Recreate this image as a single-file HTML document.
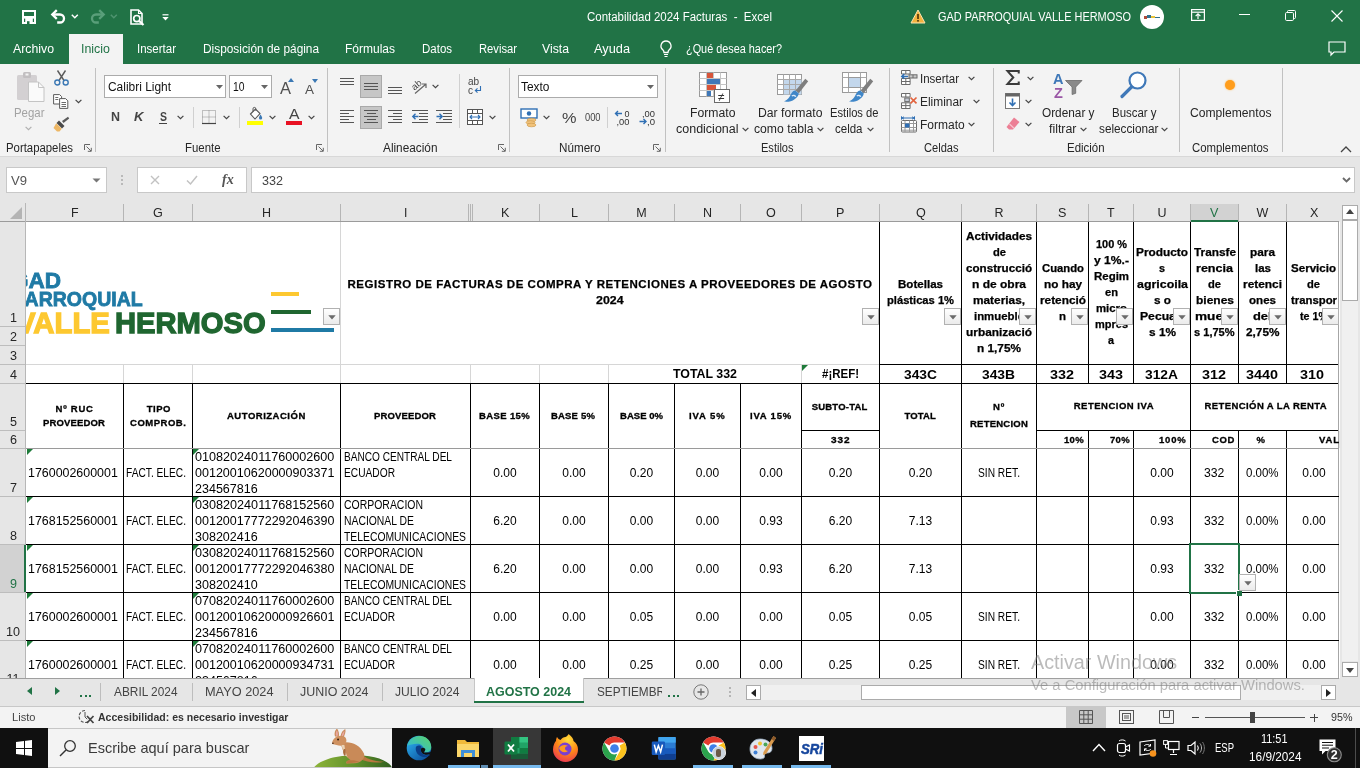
<!DOCTYPE html>
<html lang="es"><head><meta charset="utf-8"><title>Contabilidad 2024 Facturas - Excel</title>
<style>
html,body{margin:0;padding:0;}
body{will-change:transform;width:1360px;height:768px;overflow:hidden;position:relative;background:#fff;font-family:"Liberation Sans",sans-serif;font-size:12px;color:#000;}
.a{position:absolute;box-sizing:border-box;}
.t{white-space:pre;transform-origin:0 50%;}
.c{position:absolute;box-sizing:border-box;display:flex;align-items:center;justify-content:center;text-align:center;overflow:hidden;}
svg{position:absolute;overflow:visible;}
</style></head>
<body>
<div class="a " style="left:0px;top:0px;width:1360px;height:64px;background:#217346;"></div>
<div class="a " style="left:0px;top:64px;width:1360px;height:92px;background:#f3f3f3;"></div>
<div class="a " style="left:0px;top:156px;width:1360px;height:1px;background:#d8d8d8;"></div>
<div class="a " style="left:0px;top:157px;width:1360px;height:46px;background:#e6e6e6;"></div>
<svg style="left:22px;top:10px" width="14" height="14" viewBox="0 0 14 14"><rect x="1" y="1" width="12" height="12" fill="none" stroke="#fff" stroke-width="2"/><rect x="1" y="6" width="12" height="2.6" fill="#fff"/><rect x="3.2" y="8" width="7.600" height="6" fill="#fff"/><rect x="5" y="11.200" width="2.500" height="2.800" fill="#217346"/></svg>
<svg style="left:50px;top:9px" width="17" height="16" viewBox="0 0 17 16"><path d="M2.200 5.500h7.800a4 4 0 0 1 0 8h-2.800" fill="none" stroke="#fff" stroke-width="2.300"/><path d="M6.800 1.200 2.300 5.500l4.500 4.300" fill="none" stroke="#fff" stroke-width="2.300"/></svg>
<svg style="left:71px;top:14px" width="8" height="5" viewBox="0 0 8 5"><path d="M0.800 0.800l3 3 3-3" fill="none" stroke="#fff" stroke-width="1.500"/></svg>
<svg style="left:88.500px;top:9px" width="17" height="16" viewBox="0 0 17 16"><path d="M14.800 5.500h-7.800a4 4 0 0 0 0 8h2.800" fill="none" stroke="#5a9f7a" stroke-width="2.300"/><path d="M10.200 1.200l4.500 4.300-4.500 4.300" fill="none" stroke="#5a9f7a" stroke-width="2.300"/></svg>
<svg style="left:110px;top:14px" width="8" height="5" viewBox="0 0 8 5"><path d="M0.800 0.800l3 3 3-3" fill="none" stroke="#4f9470" stroke-width="1.500"/></svg>
<svg style="left:130px;top:9px" width="16" height="17" viewBox="0 0 16 17"><path d="M1 1h7.500l3.500 3.500V15H1z" fill="none" stroke="#fff" stroke-width="1.600"/><path d="M8.500 1v3.500H12" fill="none" stroke="#fff" stroke-width="1.100"/><circle cx="6.800" cy="9.600" r="3.100" fill="#217346" stroke="#fff" stroke-width="1.700"/><path d="M9.200 12l4.300 4" stroke="#fff" stroke-width="2.200"/></svg>
<svg style="left:161.500px;top:13.500px" width="7" height="7" viewBox="0 0 7 7"><path d="M0.500 0.800h6" stroke="#fff" stroke-width="1.200"/><path d="M0.300 3h6.400L3.500 6.500z" fill="#fff"/></svg>
<div class="a t" style="left:587px;top:9.0px;font-size:12px;line-height:16px;color:#fff;transform:scaleX(0.956);">Contabilidad 2024 Facturas  -  Excel</div>
<svg style="left:910px;top:9px" width="16" height="15" viewBox="0 0 16 15"><path d="M8 1 15 14H1z" fill="#f4b23e" stroke="#fbe3b0" stroke-width="1" stroke-linejoin="round"/><rect x="7.2" y="5" width="1.6" height="5" fill="#4a3208"/><rect x="7.2" y="11" width="1.6" height="1.6" fill="#4a3208"/></svg>
<div class="a t" style="left:938px;top:9.0px;font-size:12px;line-height:16px;color:#fff;transform:scaleX(0.911);">GAD PARROQUIAL VALLE HERMOSO</div>
<div class="a " style="left:1140px;top:5px;width:24px;height:24px;background:#fff;border-radius:12px;"></div>
<div class="a " style="left:1144px;top:16px;width:3px;height:3px;background:#b04a3a;"></div>
<div class="a " style="left:1147px;top:15px;width:4px;height:3px;background:#2f6f8f;"></div>
<div class="a " style="left:1151px;top:16px;width:4px;height:2px;background:#e8c33b;"></div>
<div class="a " style="left:1155px;top:17px;width:5px;height:1px;background:#2f6f8f;"></div>
<svg style="left:1191px;top:9px" width="14" height="12" viewBox="0 0 14 12"><rect x="0.6" y="0.6" width="12.8" height="10.8" fill="none" stroke="#fff" stroke-width="1.2"/><path d="M0.6 3.2h12.8" stroke="#fff" stroke-width="1.2"/><path d="M7 10V5M4.6 7.2 7 4.8l2.4 2.4" fill="none" stroke="#fff" stroke-width="1.2"/></svg>
<div class="a " style="left:1239px;top:14px;width:11px;height:1px;background:#fff;"></div>
<svg style="left:1285px;top:10px" width="11" height="11" viewBox="0 0 11 11"><rect x="0.5" y="2.5" width="8" height="8" rx="1.2" fill="none" stroke="#fff" stroke-width="1"/><path d="M2.5 2.5V1.5a1 1 0 0 1 1-1h6a1 1 0 0 1 1 1v6a1 1 0 0 1-1 1H8.5" fill="none" stroke="#fff" stroke-width="1"/></svg>
<svg style="left:1331px;top:10px" width="12" height="12" viewBox="0 0 12 12"><path d="M0.5 0.5l11 11M11.5 0.5l-11 11" stroke="#fff" stroke-width="1.1"/></svg>
<div class="a " style="left:69px;top:34px;width:54px;height:31px;background:#f3f3f3;"></div>
<div class="a t" style="left:13px;top:41.0px;font-size:12.5px;line-height:16px;color:#fff;transform:scaleX(0.984);">Archivo</div>
<div class="a t" style="left:81px;top:41.0px;font-size:12.5px;line-height:16px;color:#217346;transform:scaleX(0.994);">Inicio</div>
<div class="a t" style="left:137px;top:41.0px;font-size:12.5px;line-height:16px;color:#fff;transform:scaleX(0.920);">Insertar</div>
<div class="a t" style="left:203px;top:41.0px;font-size:12.5px;line-height:16px;color:#fff;transform:scaleX(0.949);">Disposición de página</div>
<div class="a t" style="left:345px;top:41.0px;font-size:12.5px;line-height:16px;color:#fff;transform:scaleX(0.960);">Fórmulas</div>
<div class="a t" style="left:422px;top:41.0px;font-size:12.5px;line-height:16px;color:#fff;transform:scaleX(0.919);">Datos</div>
<div class="a t" style="left:479px;top:41.0px;font-size:12.5px;line-height:16px;color:#fff;transform:scaleX(0.897);">Revisar</div>
<div class="a t" style="left:542px;top:41.0px;font-size:12.5px;line-height:16px;color:#fff;transform:scaleX(0.980);">Vista</div>
<div class="a t" style="left:594px;top:41.0px;font-size:12.5px;line-height:16px;color:#fff;transform:scaleX(1.022);">Ayuda</div>
<div class="a t" style="left:686px;top:41.0px;font-size:12.5px;line-height:16px;color:#fff;transform:scaleX(0.869);">¿Qué desea hacer?</div>
<svg style="left:659px;top:40px" width="14" height="18" viewBox="0 0 14 18"><path d="M7 1a5 5 0 0 0-3 9c.7.7 1 1.5 1 2.5h4c0-1 .3-1.8 1-2.5A5 5 0 0 0 7 1z" fill="none" stroke="#fff" stroke-width="1.3"/><path d="M5 14.5h4M5.5 16.5h3" stroke="#fff" stroke-width="1.2"/></svg>
<svg style="left:1328px;top:41px" width="18" height="15" viewBox="0 0 18 15"><path d="M1 1h16v10H6l-3 3v-3H1z" fill="none" stroke="#fff" stroke-width="1.2"/></svg>
<div class="a " style="left:95px;top:68px;width:1px;height:84px;background:#c1c1c1;"></div>
<div class="a " style="left:327px;top:68px;width:1px;height:84px;background:#c1c1c1;"></div>
<div class="a " style="left:509px;top:68px;width:1px;height:84px;background:#c1c1c1;"></div>
<div class="a " style="left:665px;top:68px;width:1px;height:84px;background:#c1c1c1;"></div>
<div class="a " style="left:889px;top:68px;width:1px;height:84px;background:#c1c1c1;"></div>
<div class="a " style="left:993px;top:68px;width:1px;height:84px;background:#c1c1c1;"></div>
<div class="a " style="left:1179px;top:68px;width:1px;height:84px;background:#c1c1c1;"></div>
<div class="a " style="left:1282px;top:68px;width:1px;height:84px;background:#c1c1c1;"></div>
<svg style="left:16px;top:71px" width="30" height="32" viewBox="0 0 30 32"><rect x="1" y="4" width="20" height="25" rx="1.5" fill="#d3d0d2"/><rect x="7" y="1" width="8" height="6" rx="1.5" fill="#c2bfc1"/><rect x="9.5" y="2.5" width="3" height="2" fill="#f3f3f3"/><path d="M12.5 11h10l5.5 5.5V30.5h-15.5z" fill="#fafafa" stroke="#c4c4c4" stroke-width="1"/><path d="M22.5 11v5.5H28" fill="none" stroke="#c4c4c4" stroke-width="1"/></svg>
<div class="a t" style="left:14px;top:105.0px;font-size:12px;line-height:16px;color:#a3a3a3;transform:scaleX(0.952);">Pegar</div>
<svg style="left:25.0px;top:126px" width="7" height="5" viewBox="0 0 7 5"><path d="M0.6 0.8l2.9 2.9 2.9-2.9" fill="none" stroke="#b0b0b0" stroke-width="1.2"/></svg>
<svg style="left:54px;top:70px" width="15" height="16" viewBox="0 0 15 16"><path d="M3.5 0.5 10 10.5M11.5 0.5 5 10.5" stroke="#5b5b5b" stroke-width="1.4" fill="none"/><circle cx="3.3" cy="12.5" r="2.5" fill="none" stroke="#3b78b4" stroke-width="1.4"/><circle cx="11.7" cy="12.5" r="2.5" fill="none" stroke="#3b78b4" stroke-width="1.4"/></svg>
<svg style="left:53px;top:94px" width="16" height="15" viewBox="0 0 16 15"><path d="M0.6 0.6h6l2 2V10H0.6z" fill="#fff" stroke="#5b5b5b" stroke-width="1"/><path d="M6.6 4.6h6l2.2 2.2v7.6H6.6z" fill="#fff" stroke="#5b5b5b" stroke-width="1"/><path d="M8.5 8.5h4.5M8.5 10.5h4.5M8.5 12.5h4.5M2.3 3.5h3M2.3 5.5h3" stroke="#5b5b5b" stroke-width="0.9"/></svg>
<svg style="left:74.5px;top:99px" width="7" height="5" viewBox="0 0 7 5"><path d="M0.6 0.8l2.9 2.9 2.9-2.9" fill="none" stroke="#444" stroke-width="1.2"/></svg>
<svg style="left:53px;top:116px" width="17" height="16" viewBox="0 0 17 16"><path d="M9 5 15 0.8l1.2 1.6L10.5 7z" fill="#5b5b5b"/><path d="M6 4.5 11.5 10 9 12.5 3.5 7z" fill="#4a4a4a"/><path d="M3.2 7.2 8.8 12.8 6.5 15.5H4l-3.5-3.5z" fill="#edb765"/></svg>
<div class="a t" style="left:6px;top:140.0px;font-size:12px;line-height:16px;color:#262626;transform:scaleX(0.947);">Portapapeles</div>
<svg style="left:84px;top:144px" width="8" height="8" viewBox="0 0 8 8"><path d="M0.5 6V0.5H6" fill="none" stroke="#666" stroke-width="1"/><path d="M2.5 2.5l4.5 4.5M7.3 3.8v3.5H3.8" fill="none" stroke="#666" stroke-width="1"/></svg>
<div class="a " style="left:104px;top:75px;width:122px;height:23px;background:#fff;border:1px solid #ababab;"></div>
<div class="a t" style="left:108px;top:79.0px;font-size:12.5px;line-height:16px;color:#111;transform:scaleX(0.955);">Calibri Light</div>
<div class="a " style="left:229px;top:75px;width:43px;height:23px;background:#fff;border:1px solid #ababab;"></div>
<div class="a t" style="left:233px;top:79.0px;font-size:12.5px;line-height:16px;color:#111;transform:scaleX(0.827);">10</div>
<svg style="left:216px;top:85.0px" width="7" height="4" viewBox="0 0 7 4"><path d="M0 0h7l-3.5 4z" fill="#666"/></svg>
<svg style="left:261px;top:85.0px" width="7" height="4" viewBox="0 0 7 4"><path d="M0 0h7l-3.5 4z" fill="#666"/></svg>
<div class="a t" style="left:280px;top:77.5px;font-size:16px;line-height:21px;color:#505050;transform:scaleX(1.031);">A</div>
<svg style="left:288px;top:78px" width="6" height="4" viewBox="0 0 6 4"><path d="M3 0l3 4H0z" fill="#3b78b4"/></svg>
<div class="a t" style="left:305px;top:80.5px;font-size:13px;line-height:17px;color:#505050;transform:scaleX(1.038);">A</div>
<svg style="left:312px;top:79px" width="6" height="4" viewBox="0 0 6 4"><path d="M0 0h6l-3 4z" fill="#3b78b4"/></svg>
<div class="a t" style="left:110.5px;top:108.0px;font-size:13px;line-height:17px;color:#444;font-weight:bold;transform:scaleX(0.959);">N</div>
<div class="a t" style="left:134px;top:108.0px;font-size:13px;line-height:17px;color:#444;font-weight:bold;font-style:italic;transform:scaleX(1.012);">K</div>
<div class="a t" style="left:159.5px;top:107.5px;font-size:13px;line-height:17px;color:#444;font-weight:bold;transform:scaleX(0.807);">S</div>
<div class="a " style="left:159px;top:123px;width:8px;height:1px;background:#444;"></div>
<svg style="left:176.5px;top:115px" width="7" height="5" viewBox="0 0 7 5"><path d="M0.6 0.8l2.9 2.9 2.9-2.9" fill="none" stroke="#444" stroke-width="1.2"/></svg>
<div class="a " style="left:193px;top:107px;width:1px;height:21px;background:#d0d0d0;"></div>
<div class="a " style="left:239px;top:107px;width:1px;height:21px;background:#d0d0d0;"></div>
<svg style="left:202px;top:110px" width="14" height="14" viewBox="0 0 14 14"><path d="M0.5 0.5h13v13H0.5zM7 0.5v13M0.5 7h13" fill="none" stroke="#8a8a8a" stroke-width="1" stroke-dasharray="1 1"/><path d="M0 13.5h14" stroke="#444" stroke-width="1.2"/></svg>
<svg style="left:222.5px;top:115px" width="7" height="5" viewBox="0 0 7 5"><path d="M0.6 0.8l2.9 2.9 2.9-2.9" fill="none" stroke="#444" stroke-width="1.2"/></svg>
<svg style="left:247px;top:108px" width="17" height="13" viewBox="0 0 17 13"><path d="M3.5 6 8.5 1l4.5 4.5-5 5.5z" fill="#fff" stroke="#555" stroke-width="1.1"/><path d="M6 3.5V0.8a1.4 1.4 0 0 1 2.8 0v2" fill="none" stroke="#555" stroke-width="1"/><path d="M13.5 6.5c1 1.5 1.7 2.6 1.7 3.4a1.6 1.6 0 0 1-3.2 0c0-.8.6-1.9 1.5-3.4z" fill="#3b78b4"/></svg>
<div class="a " style="left:247px;top:121px;width:16px;height:4px;background:#ffff00;"></div>
<svg style="left:268.5px;top:115px" width="7" height="5" viewBox="0 0 7 5"><path d="M0.6 0.8l2.9 2.9 2.9-2.9" fill="none" stroke="#444" stroke-width="1.2"/></svg>
<div class="a t" style="left:289px;top:105.0px;font-size:14.5px;line-height:19px;color:#444;transform:scaleX(1.086);">A</div>
<div class="a " style="left:286px;top:121px;width:16px;height:4px;background:#e81123;"></div>
<svg style="left:307.5px;top:115px" width="7" height="5" viewBox="0 0 7 5"><path d="M0.6 0.8l2.9 2.9 2.9-2.9" fill="none" stroke="#444" stroke-width="1.2"/></svg>
<div class="a t" style="left:185px;top:140.0px;font-size:12px;line-height:16px;color:#262626;transform:scaleX(0.950);">Fuente</div>
<svg style="left:316px;top:144px" width="8" height="8" viewBox="0 0 8 8"><path d="M0.5 6V0.5H6" fill="none" stroke="#666" stroke-width="1"/><path d="M2.5 2.5l4.5 4.5M7.3 3.8v3.5H3.8" fill="none" stroke="#666" stroke-width="1"/></svg>
<div class="a " style="left:360px;top:75px;width:22px;height:23px;background:#c6c6c6;border:1px solid #a9a9a9;"></div>
<div class="a " style="left:360px;top:106px;width:22px;height:23px;background:#c6c6c6;border:1px solid #a9a9a9;"></div>
<div class="a " style="left:340px;top:78px;width:14px;height:1px;background:#555;"></div>
<div class="a " style="left:340px;top:81px;width:14px;height:1px;background:#555;"></div>
<div class="a " style="left:340px;top:84px;width:14px;height:1px;background:#555;"></div>
<div class="a " style="left:364px;top:83px;width:14px;height:1px;background:#555;"></div>
<div class="a " style="left:364px;top:86px;width:14px;height:1px;background:#555;"></div>
<div class="a " style="left:364px;top:89px;width:14px;height:1px;background:#555;"></div>
<div class="a " style="left:388px;top:87px;width:14px;height:1px;background:#555;"></div>
<div class="a " style="left:388px;top:90px;width:14px;height:1px;background:#555;"></div>
<div class="a " style="left:388px;top:93px;width:14px;height:1px;background:#555;"></div>
<div class="a " style="left:340px;top:110px;width:14px;height:1px;background:#555;"></div>
<div class="a " style="left:340px;top:113px;width:9px;height:1px;background:#555;"></div>
<div class="a " style="left:340px;top:116px;width:14px;height:1px;background:#555;"></div>
<div class="a " style="left:340px;top:119px;width:9px;height:1px;background:#555;"></div>
<div class="a " style="left:340px;top:122px;width:14px;height:1px;background:#555;"></div>
<div class="a " style="left:364.0px;top:110px;width:14px;height:1px;background:#555;"></div>
<div class="a " style="left:366.5px;top:113px;width:9px;height:1px;background:#555;"></div>
<div class="a " style="left:364.0px;top:116px;width:14px;height:1px;background:#555;"></div>
<div class="a " style="left:366.5px;top:119px;width:9px;height:1px;background:#555;"></div>
<div class="a " style="left:364.0px;top:122px;width:14px;height:1px;background:#555;"></div>
<div class="a " style="left:388px;top:110px;width:14px;height:1px;background:#555;"></div>
<div class="a " style="left:393px;top:113px;width:9px;height:1px;background:#555;"></div>
<div class="a " style="left:388px;top:116px;width:14px;height:1px;background:#555;"></div>
<div class="a " style="left:393px;top:119px;width:9px;height:1px;background:#555;"></div>
<div class="a " style="left:388px;top:122px;width:14px;height:1px;background:#555;"></div>
<svg style="left:411px;top:77px" width="17" height="18" viewBox="0 0 17 18"><text x="1" y="11" font-size="9.5" font-family="Liberation Sans, sans-serif" fill="#444" transform="rotate(-40 6 9)">ab</text><path d="M4 16.5 14.5 7.5M11 7h4v4" fill="none" stroke="#666" stroke-width="1.2"/></svg>
<svg style="left:431.5px;top:83.5px" width="7" height="5" viewBox="0 0 7 5"><path d="M0.6 0.8l2.9 2.9 2.9-2.9" fill="none" stroke="#444" stroke-width="1.2"/></svg>
<div class="a " style="left:419px;top:110px;width:9px;height:1px;background:#555;"></div>
<div class="a " style="left:419px;top:113px;width:9px;height:1px;background:#555;"></div>
<div class="a " style="left:419px;top:116px;width:9px;height:1px;background:#555;"></div>
<div class="a " style="left:419px;top:119px;width:9px;height:1px;background:#555;"></div>
<div class="a " style="left:419px;top:122px;width:9px;height:1px;background:#555;"></div>
<div class="a " style="left:412px;top:110px;width:16px;height:1px;background:#555;"></div>
<div class="a " style="left:412px;top:122px;width:16px;height:1px;background:#555;"></div>
<svg style="left:412px;top:113px" width="7" height="7" viewBox="0 0 7 7"><path d="M6.5 3.5H1M3.5 0.8 0.8 3.5 3.5 6.2" fill="none" stroke="#2f6fb4" stroke-width="1.4"/></svg>
<div class="a " style="left:443px;top:110px;width:9px;height:1px;background:#555;"></div>
<div class="a " style="left:443px;top:113px;width:9px;height:1px;background:#555;"></div>
<div class="a " style="left:443px;top:116px;width:9px;height:1px;background:#555;"></div>
<div class="a " style="left:443px;top:119px;width:9px;height:1px;background:#555;"></div>
<div class="a " style="left:443px;top:122px;width:9px;height:1px;background:#555;"></div>
<div class="a " style="left:436px;top:110px;width:16px;height:1px;background:#555;"></div>
<div class="a " style="left:436px;top:122px;width:16px;height:1px;background:#555;"></div>
<svg style="left:436px;top:113px" width="7" height="7" viewBox="0 0 7 7"><path d="M0.5 3.5H6M3.5 0.8 6.2 3.5 3.5 6.2" fill="none" stroke="#2f6fb4" stroke-width="1.4"/></svg>
<div class="a " style="left:459px;top:74px;width:1px;height:54px;background:#d0d0d0;"></div>
<svg style="left:467px;top:76px" width="16" height="20" viewBox="0 0 16 20"><text x="1" y="9" font-size="10" font-family="Liberation Sans, sans-serif" fill="#444">ab</text><text x="1" y="17.5" font-size="10" font-family="Liberation Sans, sans-serif" fill="#444">c</text><path d="M13.5 10v4.5H8.5M10.5 12.3 8.3 14.5l2.2 2.2" fill="none" stroke="#2f6fb4" stroke-width="1.1"/></svg>
<svg style="left:467px;top:109px" width="16" height="16" viewBox="0 0 16 16"><rect x="0.5" y="0.5" width="15" height="15" fill="#fff" stroke="#555"/><path d="M0.5 4.5h15M0.5 11.5h15M5.5 0.5v4M10.5 0.5v4M5.5 11.5v4M10.5 11.5v4" stroke="#555" stroke-width="1"/><path d="M3 8h10M5 6 3 8l2 2M11 6l2 2-2 2" fill="none" stroke="#2f6fb4" stroke-width="1.1"/></svg>
<svg style="left:488.5px;top:115px" width="7" height="5" viewBox="0 0 7 5"><path d="M0.6 0.8l2.9 2.9 2.9-2.9" fill="none" stroke="#444" stroke-width="1.2"/></svg>
<div class="a t" style="left:383px;top:140.0px;font-size:12px;line-height:16px;color:#262626;transform:scaleX(0.984);">Alineación</div>
<svg style="left:498px;top:144px" width="8" height="8" viewBox="0 0 8 8"><path d="M0.5 6V0.5H6" fill="none" stroke="#666" stroke-width="1"/><path d="M2.5 2.5l4.5 4.5M7.3 3.8v3.5H3.8" fill="none" stroke="#666" stroke-width="1"/></svg>
<div class="a " style="left:518px;top:75px;width:140px;height:23px;background:#fff;border:1px solid #ababab;"></div>
<div class="a t" style="left:521px;top:79.0px;font-size:12.5px;line-height:16px;color:#111;transform:scaleX(0.954);">Texto</div>
<svg style="left:647px;top:85.0px" width="7" height="4" viewBox="0 0 7 4"><path d="M0 0h7l-3.5 4z" fill="#666"/></svg>
<svg style="left:520px;top:108px" width="20" height="19" viewBox="0 0 20 19"><rect x="1" y="1" width="16" height="9" fill="#fff" stroke="#2f6fb4" stroke-width="1.4"/><circle cx="9" cy="5.5" r="2.2" fill="#2f6fb4"/><ellipse cx="11.5" cy="12" rx="4.5" ry="1.8" fill="#f1c27a" stroke="#c99546" stroke-width="0.6"/><ellipse cx="10.5" cy="14.5" rx="4.5" ry="1.8" fill="#f1c27a" stroke="#c99546" stroke-width="0.6"/><ellipse cx="11.5" cy="17" rx="4.5" ry="1.8" fill="#f1c27a" stroke="#c99546" stroke-width="0.6"/></svg>
<svg style="left:542.5px;top:115px" width="7" height="5" viewBox="0 0 7 5"><path d="M0.6 0.8l2.9 2.9 2.9-2.9" fill="none" stroke="#444" stroke-width="1.2"/></svg>
<div class="a t" style="left:562px;top:107.5px;font-size:15px;line-height:20px;color:#444;transform:scaleX(1.087);">%</div>
<div class="a t" style="left:584.5px;top:110.5px;font-size:10px;line-height:13px;color:#444;transform:scaleX(0.929);">000</div>
<div class="a " style="left:607px;top:107px;width:1px;height:21px;background:#d0d0d0;"></div>
<svg style="left:614px;top:109px" width="18" height="17" viewBox="0 0 18 17"><text x="10.500" y="7.500" font-size="9" font-family="Liberation Sans, sans-serif" fill="#333" textLength="5" lengthAdjust="spacingAndGlyphs">0</text><text x="2.500" y="15.500" font-size="9" font-family="Liberation Sans, sans-serif" fill="#333" textLength="13" lengthAdjust="spacingAndGlyphs">,00</text><path d="M8 4.500H1.500M4 2 1.500 4.500 4 7" fill="none" stroke="#2f6fb4" stroke-width="1.400"/></svg>
<svg style="left:639px;top:109px" width="18" height="17" viewBox="0 0 18 17"><text x="3" y="7.500" font-size="9" font-family="Liberation Sans, sans-serif" fill="#333" textLength="13" lengthAdjust="spacingAndGlyphs">,00</text><text x="8" y="15.500" font-size="9" font-family="Liberation Sans, sans-serif" fill="#333" textLength="8" lengthAdjust="spacingAndGlyphs">,0</text><path d="M0.500 12.500h6.500M4.500 10l2.500 2.500L4.500 15" fill="none" stroke="#2f6fb4" stroke-width="1.400"/></svg>
<div class="a t" style="left:559px;top:140.0px;font-size:12px;line-height:16px;color:#262626;transform:scaleX(0.972);">Número</div>
<svg style="left:653px;top:144px" width="8" height="8" viewBox="0 0 8 8"><path d="M0.5 6V0.5H6" fill="none" stroke="#666" stroke-width="1"/><path d="M2.5 2.5l4.5 4.5M7.3 3.8v3.5H3.8" fill="none" stroke="#666" stroke-width="1"/></svg>
<svg style="left:699px;top:72px" width="32" height="32" viewBox="0 0 32 32"><rect x="0.5" y="0.5" width="27" height="24" fill="#fff" stroke="#9a9a9a"/><path d="M0.5 6.5h27M0.5 12.5h27M0.5 18.5h27M7.5 0.5v24M14.5 0.5v24M21.5 0.5v24" stroke="#c5c5c5" stroke-width="1"/><rect x="8" y="1" width="6" height="5" fill="#d8553a"/><rect x="8" y="7" width="13" height="5" fill="#3f78b8"/><rect x="8" y="13" width="9" height="5" fill="#d8553a"/><rect x="8" y="19" width="4" height="5" fill="#3f78b8"/><rect x="15.5" y="17.5" width="15" height="13" fill="#fff" stroke="#6a6a6a"/><text x="19" y="28.5" font-size="12" font-family="Liberation Sans, sans-serif" fill="#333">≠</text></svg>
<div class="a t" style="left:690px;top:105.0px;font-size:12px;line-height:16px;color:#262626;transform:scaleX(1.018);">Formato</div>
<div class="a t" style="left:676px;top:121.0px;font-size:12px;line-height:16px;color:#262626;transform:scaleX(1.041);">condicional</div>
<svg style="left:741.5px;top:127px" width="7" height="5" viewBox="0 0 7 5"><path d="M0.6 0.8l2.9 2.9 2.9-2.9" fill="none" stroke="#444" stroke-width="1.2"/></svg>
<svg style="left:777px;top:74px" width="26" height="22" viewBox="0 0 26 22"><rect x="0.5" y="0.5" width="24" height="20" fill="#fff" stroke="#9a9a9a"/><rect x="6.5" y="5.5" width="18" height="15" fill="#c3d7ec"/><path d="M0.5 5.5h24M0.5 10.5h24M0.5 15.5h24M6.5 0.5v20M12.5 0.5v20M18.5 0.5v20" stroke="#a9a9a9" stroke-width="1"/></svg>
<svg style="left:783px;top:78px" width="26" height="26" viewBox="0 0 26 26"><path d="M22.300 0.800 25.200 3.200 15.800 15.200 12.600 12.600z" fill="#7e7e7e"/><path d="M12.200 12.400 15.800 15.400c-1 5-7.200 9.200-14.800 8.200 4-2 5.600-4.600 7-7.600 1-2.200 2.400-3.400 4.200-3.600z" fill="#3f86c8"/><path d="M8.800 18c1.400-1 3.200-.6 4 .8" stroke="#dce9f7" stroke-width="1.300" fill="none"/></svg>
<div class="a t" style="left:758px;top:105.0px;font-size:12px;line-height:16px;color:#262626;transform:scaleX(1.018);">Dar formato</div>
<div class="a t" style="left:754px;top:121.0px;font-size:12px;line-height:16px;color:#262626;transform:scaleX(1.014);">como tabla</div>
<svg style="left:816.5px;top:127px" width="7" height="5" viewBox="0 0 7 5"><path d="M0.6 0.8l2.9 2.9 2.9-2.9" fill="none" stroke="#444" stroke-width="1.2"/></svg>
<svg style="left:842px;top:72px" width="26" height="22" viewBox="0 0 26 22"><rect x="0.5" y="0.5" width="24" height="20" fill="#fff" stroke="#9a9a9a"/><path d="M0.5 5.5h24M0.5 15.5h24M6.5 0.5v20M18.5 0.5v20" stroke="#a9a9a9" stroke-width="1"/><rect x="6.5" y="5.5" width="12" height="10" fill="#c3d7ec" stroke="#9a9a9a"/></svg>
<svg style="left:848px;top:77.5px" width="26" height="26" viewBox="0 0 26 26"><path d="M22.300 0.800 25.200 3.200 15.800 15.200 12.600 12.600z" fill="#7e7e7e"/><path d="M12.200 12.400 15.800 15.400c-1 5-7.200 9.200-14.800 8.200 4-2 5.600-4.600 7-7.600 1-2.200 2.400-3.400 4.200-3.600z" fill="#3f86c8"/><path d="M8.800 18c1.400-1 3.200-.6 4 .8" stroke="#dce9f7" stroke-width="1.300" fill="none"/></svg>
<div class="a t" style="left:830px;top:105.0px;font-size:12px;line-height:16px;color:#262626;transform:scaleX(0.932);">Estilos de</div>
<div class="a t" style="left:835px;top:121.0px;font-size:12px;line-height:16px;color:#262626;transform:scaleX(0.959);">celda</div>
<svg style="left:866.5px;top:127px" width="7" height="5" viewBox="0 0 7 5"><path d="M0.6 0.8l2.9 2.9 2.9-2.9" fill="none" stroke="#444" stroke-width="1.2"/></svg>
<div class="a t" style="left:761px;top:140.0px;font-size:12px;line-height:16px;color:#262626;transform:scaleX(0.920);">Estilos</div>
<svg style="left:901px;top:70px" width="17" height="17" viewBox="0 0 17 17"><path d="M0.5 0.5h8.600v3.500H0.500zM4.800 0.500v3.500" fill="#fff" stroke="#6b6b6b"/><path d="M0.500 8.500h8.600v6H0.500zM4.800 8.500v6M0.500 11.500h8.600" fill="#fff" stroke="#6b6b6b"/><rect x="8" y="4.800" width="8" height="3.200" fill="#c9c9c9" stroke="#6b6b6b"/><path d="M12 4.800v3.200" stroke="#6b6b6b"/><path d="M7 6.400H0.800M3.300 4 0.800 6.400l2.500 2.400" fill="none" stroke="#2f6fb4" stroke-width="1.500"/></svg>
<div class="a t" style="left:920px;top:71.0px;font-size:12px;line-height:16px;color:#262626;transform:scaleX(0.959);">Insertar</div>
<svg style="left:968.0px;top:76px" width="7" height="5" viewBox="0 0 7 5"><path d="M0.6 0.8l2.9 2.9 2.9-2.9" fill="none" stroke="#444" stroke-width="1.2"/></svg>
<svg style="left:901px;top:93px" width="17" height="17" viewBox="0 0 17 17"><path d="M0.500 0.500h8.600v3.500H0.500zM4.800 0.500v3.500" fill="#fff" stroke="#6b6b6b"/><path d="M0.500 9.800h8.600v5.700H0.500zM4.800 9.800v5.700M0.500 12.600h8.600" fill="#fff" stroke="#6b6b6b"/><rect x="3.800" y="5" width="4.500" height="3.600" fill="#c5cbd6" stroke="#6b6b6b"/><path d="M9.500 4.500l6 5.800M15.500 4.500l-6 5.800" stroke="#e2643f" stroke-width="1.700"/></svg>
<div class="a t" style="left:920px;top:94.0px;font-size:12px;line-height:16px;color:#262626;transform:scaleX(0.992);">Eliminar</div>
<svg style="left:972.5px;top:99px" width="7" height="5" viewBox="0 0 7 5"><path d="M0.6 0.8l2.9 2.9 2.9-2.9" fill="none" stroke="#444" stroke-width="1.2"/></svg>
<svg style="left:901px;top:116px" width="17" height="17" viewBox="0 0 17 17"><path d="M0.500 2h13M0.500 0.300v3.400M13.500 0.300v3.400M3 0.800 1 2l2 1.200M11 0.800l2 1.200-2 1.200" stroke="#2f6fb4" stroke-width="1" fill="none"/><rect x="0.500" y="4.500" width="15" height="11.500" rx="1" fill="#fff" stroke="#6b6b6b"/><path d="M0.500 7.500h15M0.500 11.500h15M0.500 14.200h15M4 4.500v11.500M8.500 4.500v11.500M12.500 4.500v11.500" stroke="#9a9a9a" stroke-width="1"/><rect x="4" y="7.500" width="4.500" height="4" fill="#2f6fb4"/></svg>
<div class="a t" style="left:920px;top:117.0px;font-size:12px;line-height:16px;color:#262626;">Formato</div>
<svg style="left:967.5px;top:122px" width="7" height="5" viewBox="0 0 7 5"><path d="M0.6 0.8l2.9 2.9 2.9-2.9" fill="none" stroke="#444" stroke-width="1.2"/></svg>
<div class="a t" style="left:924px;top:140.0px;font-size:12px;line-height:16px;color:#262626;transform:scaleX(0.924);">Celdas</div>
<svg style="left:1005px;top:70px" width="16" height="15" viewBox="0 0 16 17"><path d="M14.5 4V1.2H1.8l6.5 7.3L1.8 15.8h12.700v-2.800" fill="none" stroke="#3c3c3c" stroke-width="2.300"/></svg>
<svg style="left:1026.5px;top:76px" width="7" height="5" viewBox="0 0 7 5"><path d="M0.6 0.8l2.9 2.9 2.9-2.9" fill="none" stroke="#444" stroke-width="1.2"/></svg>
<svg style="left:1005px;top:93px" width="15" height="16" viewBox="0 0 15 16"><rect x="0.5" y="0.5" width="14" height="15" fill="#fff" stroke="#777"/><rect x="0.5" y="0.5" width="14" height="3" fill="#666"/><path d="M7.5 5.5v7M4.5 9.5l3 3 3-3" fill="none" stroke="#2f6fb4" stroke-width="1.6"/></svg>
<svg style="left:1024.5px;top:99px" width="7" height="5" viewBox="0 0 7 5"><path d="M0.6 0.8l2.9 2.9 2.9-2.9" fill="none" stroke="#444" stroke-width="1.2"/></svg>
<svg style="left:1006px;top:117px" width="14" height="13" viewBox="0 0 14 13"><path d="M8 0.5 13.5 5 7 12.5H3L0.5 10z" fill="#ec7f95"/><path d="M3.5 7 8 11.2" stroke="#f8c4ce" stroke-width="1.2"/></svg>
<svg style="left:1024.5px;top:122px" width="7" height="5" viewBox="0 0 7 5"><path d="M0.6 0.8l2.9 2.9 2.9-2.9" fill="none" stroke="#444" stroke-width="1.2"/></svg>
<svg style="left:1052px;top:70px" width="32" height="32" viewBox="0 0 32 32"><text x="1" y="13.500" font-size="14.500" font-weight="bold" font-family="Liberation Sans, sans-serif" fill="#3f78b8">A</text><text x="2" y="27.500" font-size="14.500" font-weight="bold" font-family="Liberation Sans, sans-serif" fill="#9a57a6">Z</text><path d="M13.500 10.500h16.500l-6.300 6.500v6.300l-3.600 1.200V17z" fill="#8a8a8a" stroke="#6a6a6a" stroke-width="0.800"/></svg>
<div class="a t" style="left:1042px;top:105.0px;font-size:12px;line-height:16px;color:#262626;transform:scaleX(0.984);">Ordenar y</div>
<div class="a t" style="left:1049px;top:121.0px;font-size:12px;line-height:16px;color:#262626;transform:scaleX(1.031);">filtrar</div>
<svg style="left:1079.5px;top:127px" width="7" height="5" viewBox="0 0 7 5"><path d="M0.6 0.8l2.9 2.9 2.9-2.9" fill="none" stroke="#444" stroke-width="1.2"/></svg>
<svg style="left:1119px;top:70px" width="30" height="30" viewBox="0 0 30 30"><circle cx="18.5" cy="10.5" r="8" fill="#fff" stroke="#3f78b8" stroke-width="2.2"/><path d="M12.5 17 3 26.5" stroke="#3f78b8" stroke-width="3.2" stroke-linecap="round"/></svg>
<div class="a t" style="left:1112px;top:105.0px;font-size:12px;line-height:16px;color:#262626;transform:scaleX(0.953);">Buscar y</div>
<div class="a t" style="left:1099px;top:121.0px;font-size:12px;line-height:16px;color:#262626;transform:scaleX(0.980);">seleccionar</div>
<svg style="left:1160.5px;top:127px" width="7" height="5" viewBox="0 0 7 5"><path d="M0.6 0.8l2.9 2.9 2.9-2.9" fill="none" stroke="#444" stroke-width="1.2"/></svg>
<div class="a t" style="left:1067px;top:140.0px;font-size:12px;line-height:16px;color:#262626;transform:scaleX(0.953);">Edición</div>
<div class="a " style="left:1225px;top:80px;width:10px;height:10px;background:#ff9d1c;border-radius:5px;box-shadow:0 0 2px #ffb650;"></div>
<div class="a t" style="left:1190px;top:105.0px;font-size:12px;line-height:16px;color:#262626;transform:scaleX(1.010);">Complementos</div>
<div class="a t" style="left:1192px;top:140.0px;font-size:12px;line-height:16px;color:#262626;transform:scaleX(0.948);">Complementos</div>
<svg style="left:1340px;top:146px" width="12" height="7" viewBox="0 0 12 7"><path d="M1 6l5-5 5 5" fill="none" stroke="#444" stroke-width="1.3"/></svg>
<div class="a " style="left:6px;top:167px;width:101px;height:26px;background:#fff;border:1px solid #c8c8c8;"></div>
<div class="a t" style="left:11px;top:172.5px;font-size:12px;line-height:16px;color:#555;transform:scaleX(1.090);">V9</div>
<svg style="left:92px;top:178px" width="9" height="5" viewBox="0 0 9 5"><path d="M0.5 0.5h8l-4 4z" fill="#777"/></svg>
<div class="a " style="left:121px;top:175px;width:2px;height:2px;background:#b9b9b9;"></div>
<div class="a " style="left:121px;top:179px;width:2px;height:2px;background:#b9b9b9;"></div>
<div class="a " style="left:121px;top:183px;width:2px;height:2px;background:#b9b9b9;"></div>
<div class="a " style="left:137px;top:167px;width:110px;height:26px;background:#fff;border:1px solid #c8c8c8;"></div>
<svg style="left:150px;top:175px" width="10" height="10" viewBox="0 0 10 10"><path d="M1 1l8 8M9 1l-8 8" stroke="#c2c2c2" stroke-width="1.4"/></svg>
<svg style="left:186px;top:175px" width="12" height="10" viewBox="0 0 12 10"><path d="M1 5.5l3.5 3.5L11 1" fill="none" stroke="#c2c2c2" stroke-width="1.5"/></svg>
<div class="a t" style="left:222px;top:170.5px;font-size:14px;line-height:18px;color:#555;font-weight:bold;font-style:italic;font-family:'Liberation Serif',serif;">fx</div>
<div class="a " style="left:251px;top:167px;width:1104px;height:26px;background:#fff;border:1px solid #c8c8c8;"></div>
<div class="a t" style="left:262px;top:172.5px;font-size:12px;line-height:16px;color:#444;transform:scaleX(1.049);">332</div>
<svg style="left:1342px;top:177px" width="9" height="6" viewBox="0 0 9 6"><path d="M1 1l3.5 3.5L8 1" fill="none" stroke="#6a6a6a" stroke-width="1.9"/></svg>
<div class="a " style="left:0px;top:203px;width:1360px;height:19px;background:#e6e6e6;"></div>
<div class="a " style="left:0px;top:221px;width:1339px;height:1px;background:#9b9b9b;"></div>
<div class="a " style="left:26px;top:222px;width:1313px;height:456px;background:#fff;"></div>
<div class="a " style="left:0px;top:222px;width:25px;height:456px;background:#e6e6e6;"></div>
<div class="a " style="left:25px;top:203px;width:1px;height:475px;background:#b7b7b7;"></div>
<svg style="left:10px;top:207px" width="12" height="12" viewBox="0 0 12 12"><path d="M12 0v12H0z" fill="#b4b4b4"/></svg>
<div class="a t" style="left:70.7px;top:204.5px;font-size:12.5px;line-height:16px;color:#262626;transform:scaleX(0.995);">F</div>
<div class="a " style="left:123px;top:204px;width:1px;height:17px;background:#b5b5b5;"></div>
<div class="a t" style="left:153.1px;top:204.5px;font-size:12.5px;line-height:16px;color:#262626;transform:scaleX(1.008);">G</div>
<div class="a " style="left:192px;top:204px;width:1px;height:17px;background:#b5b5b5;"></div>
<div class="a t" style="left:262.0px;top:204.5px;font-size:12.5px;line-height:16px;color:#262626;">H</div>
<div class="a " style="left:340px;top:204px;width:1px;height:17px;background:#b5b5b5;"></div>
<div class="a t" style="left:403.8px;top:204.5px;font-size:12.5px;line-height:16px;color:#262626;transform:scaleX(0.979);">I</div>
<div class="a " style="left:470px;top:204px;width:1px;height:17px;background:#b5b5b5;"></div>
<div class="a t" style="left:500.8px;top:204.5px;font-size:12.5px;line-height:16px;color:#262626;transform:scaleX(1.007);">K</div>
<div class="a " style="left:539px;top:204px;width:1px;height:17px;background:#b5b5b5;"></div>
<div class="a t" style="left:570.5px;top:204.5px;font-size:12.5px;line-height:16px;color:#262626;transform:scaleX(1.007);">L</div>
<div class="a " style="left:608px;top:204px;width:1px;height:17px;background:#b5b5b5;"></div>
<div class="a t" style="left:636.3px;top:204.5px;font-size:12.5px;line-height:16px;color:#262626;">M</div>
<div class="a " style="left:674px;top:204px;width:1px;height:17px;background:#b5b5b5;"></div>
<div class="a t" style="left:703.0px;top:204.5px;font-size:12.5px;line-height:16px;color:#262626;">N</div>
<div class="a " style="left:740px;top:204px;width:1px;height:17px;background:#b5b5b5;"></div>
<div class="a t" style="left:766.1px;top:204.5px;font-size:12.5px;line-height:16px;color:#262626;transform:scaleX(1.008);">O</div>
<div class="a " style="left:801px;top:204px;width:1px;height:17px;background:#b5b5b5;"></div>
<div class="a t" style="left:836.3px;top:204.5px;font-size:12.5px;line-height:16px;color:#262626;transform:scaleX(1.007);">P</div>
<div class="a " style="left:879px;top:204px;width:1px;height:17px;background:#b5b5b5;"></div>
<div class="a t" style="left:915.6px;top:204.5px;font-size:12.5px;line-height:16px;color:#262626;transform:scaleX(1.008);">Q</div>
<div class="a " style="left:961px;top:204px;width:1px;height:17px;background:#b5b5b5;"></div>
<div class="a t" style="left:994.5px;top:204.5px;font-size:12.5px;line-height:16px;color:#262626;">R</div>
<div class="a " style="left:1036px;top:204px;width:1px;height:17px;background:#b5b5b5;"></div>
<div class="a t" style="left:1058.3px;top:204.5px;font-size:12.5px;line-height:16px;color:#262626;transform:scaleX(1.007);">S</div>
<div class="a " style="left:1088px;top:204px;width:1px;height:17px;background:#b5b5b5;"></div>
<div class="a t" style="left:1107.2px;top:204.5px;font-size:12.5px;line-height:16px;color:#262626;transform:scaleX(0.995);">T</div>
<div class="a " style="left:1133px;top:204px;width:1px;height:17px;background:#b5b5b5;"></div>
<div class="a t" style="left:1157.5px;top:204.5px;font-size:12.5px;line-height:16px;color:#262626;">U</div>
<div class="a " style="left:1190px;top:204px;width:1px;height:17px;background:#b5b5b5;"></div>
<div class="a " style="left:1191px;top:204px;width:47px;height:17px;background:#d2d2d2;"></div>
<div class="a " style="left:1191px;top:220px;width:47px;height:2px;background:#217346;"></div>
<div class="a t" style="left:1210.3px;top:204.5px;font-size:12.5px;line-height:16px;color:#217346;transform:scaleX(1.007);">V</div>
<div class="a " style="left:1238px;top:204px;width:1px;height:17px;background:#b5b5b5;"></div>
<div class="a t" style="left:1256.6px;top:204.5px;font-size:12.5px;line-height:16px;color:#262626;">W</div>
<div class="a " style="left:1286px;top:204px;width:1px;height:17px;background:#b5b5b5;"></div>
<div class="a t" style="left:1309.8px;top:204.5px;font-size:12.5px;line-height:16px;color:#262626;transform:scaleX(1.007);">X</div>
<div class="a " style="left:468px;top:204px;width:1px;height:17px;background:#b5b5b5;"></div>
<div class="a " style="left:472px;top:204px;width:1px;height:17px;background:#b5b5b5;"></div>
<div class="a " style="left:0px;top:326px;width:25px;height:1px;background:#bdbdbd;"></div>
<div class="a t" style="left:9.5px;top:310.0px;font-size:12.5px;line-height:16px;color:#262626;transform:scaleX(1.007);">1</div>
<div class="a " style="left:0px;top:345px;width:25px;height:1px;background:#bdbdbd;"></div>
<div class="a t" style="left:9.5px;top:329.0px;font-size:12.5px;line-height:16px;color:#262626;transform:scaleX(1.007);">2</div>
<div class="a " style="left:0px;top:364px;width:25px;height:1px;background:#bdbdbd;"></div>
<div class="a t" style="left:9.5px;top:348.0px;font-size:12.5px;line-height:16px;color:#262626;transform:scaleX(1.007);">3</div>
<div class="a " style="left:0px;top:383px;width:25px;height:1px;background:#bdbdbd;"></div>
<div class="a t" style="left:9.5px;top:367.0px;font-size:12.5px;line-height:16px;color:#262626;transform:scaleX(1.007);">4</div>
<div class="a " style="left:0px;top:430px;width:25px;height:1px;background:#bdbdbd;"></div>
<div class="a t" style="left:9.5px;top:414.0px;font-size:12.5px;line-height:16px;color:#262626;transform:scaleX(1.007);">5</div>
<div class="a " style="left:0px;top:448px;width:25px;height:1px;background:#bdbdbd;"></div>
<div class="a t" style="left:9.5px;top:432.0px;font-size:12.5px;line-height:16px;color:#262626;transform:scaleX(1.007);">6</div>
<div class="a " style="left:0px;top:496px;width:25px;height:1px;background:#bdbdbd;"></div>
<div class="a t" style="left:9.5px;top:480.0px;font-size:12.5px;line-height:16px;color:#262626;transform:scaleX(1.007);">7</div>
<div class="a " style="left:0px;top:544px;width:25px;height:1px;background:#bdbdbd;"></div>
<div class="a t" style="left:9.5px;top:528.0px;font-size:12.5px;line-height:16px;color:#262626;transform:scaleX(1.007);">8</div>
<div class="a " style="left:0px;top:545px;width:24px;height:47px;background:#d2d2d2;"></div>
<div class="a " style="left:24px;top:545px;width:2px;height:47px;background:#217346;"></div>
<div class="a " style="left:0px;top:592px;width:25px;height:1px;background:#bdbdbd;"></div>
<div class="a t" style="left:9.5px;top:576.0px;font-size:12.5px;line-height:16px;color:#217346;transform:scaleX(1.007);">9</div>
<div class="a " style="left:0px;top:640px;width:25px;height:1px;background:#bdbdbd;"></div>
<div class="a t" style="left:6.0px;top:624.0px;font-size:12.5px;line-height:16px;color:#262626;transform:scaleX(1.007);">10</div>
<div class="a t" style="left:6.5px;top:671.0px;font-size:12.5px;line-height:16px;color:#262626;">11</div>
<div class="a " style="left:340px;top:222px;width:1px;height:142px;background:#d6d6d6;"></div>
<div class="a " style="left:26px;top:364px;width:853px;height:1px;background:#d6d6d6;"></div>
<div class="a " style="left:123px;top:365px;width:1px;height:18px;background:#d6d6d6;"></div>
<div class="a " style="left:192px;top:365px;width:1px;height:18px;background:#d6d6d6;"></div>
<div class="a " style="left:340px;top:365px;width:1px;height:18px;background:#d6d6d6;"></div>
<div class="a " style="left:470px;top:365px;width:1px;height:18px;background:#d6d6d6;"></div>
<div class="a " style="left:539px;top:365px;width:1px;height:18px;background:#d6d6d6;"></div>
<div class="a " style="left:608px;top:365px;width:1px;height:18px;background:#d6d6d6;"></div>
<div class="a " style="left:801px;top:365px;width:1px;height:18px;background:#d6d6d6;"></div>
<div class="a " style="left:879px;top:222px;width:1px;height:161px;background:#000;"></div>
<div class="a " style="left:961px;top:222px;width:1px;height:161px;background:#000;"></div>
<div class="a " style="left:1036px;top:222px;width:1px;height:161px;background:#000;"></div>
<div class="a " style="left:1088px;top:222px;width:1px;height:161px;background:#000;"></div>
<div class="a " style="left:1133px;top:222px;width:1px;height:161px;background:#000;"></div>
<div class="a " style="left:1190px;top:222px;width:1px;height:161px;background:#000;"></div>
<div class="a " style="left:1238px;top:222px;width:1px;height:161px;background:#000;"></div>
<div class="a " style="left:1286px;top:222px;width:1px;height:161px;background:#000;"></div>
<div class="a " style="left:879px;top:364px;width:459px;height:1px;background:#000;"></div>
<div class="a " style="left:26px;top:383px;width:1313px;height:1px;background:#000;"></div>
<div class="a " style="left:1338px;top:222px;width:1px;height:456px;background:#a6a6a6;"></div>
<div class="a " style="left:123px;top:383px;width:1px;height:65px;background:#000;"></div>
<div class="a " style="left:192px;top:383px;width:1px;height:65px;background:#000;"></div>
<div class="a " style="left:340px;top:383px;width:1px;height:65px;background:#000;"></div>
<div class="a " style="left:470px;top:383px;width:1px;height:65px;background:#000;"></div>
<div class="a " style="left:539px;top:383px;width:1px;height:65px;background:#000;"></div>
<div class="a " style="left:608px;top:383px;width:1px;height:65px;background:#000;"></div>
<div class="a " style="left:674px;top:383px;width:1px;height:65px;background:#000;"></div>
<div class="a " style="left:740px;top:383px;width:1px;height:65px;background:#000;"></div>
<div class="a " style="left:801px;top:383px;width:1px;height:65px;background:#000;"></div>
<div class="a " style="left:879px;top:383px;width:1px;height:65px;background:#000;"></div>
<div class="a " style="left:961px;top:383px;width:1px;height:65px;background:#000;"></div>
<div class="a " style="left:1036px;top:383px;width:1px;height:65px;background:#000;"></div>
<div class="a " style="left:1190px;top:383px;width:1px;height:65px;background:#000;"></div>
<div class="a " style="left:1088px;top:430px;width:1px;height:18px;background:#000;"></div>
<div class="a " style="left:1133px;top:430px;width:1px;height:18px;background:#000;"></div>
<div class="a " style="left:1238px;top:430px;width:1px;height:18px;background:#000;"></div>
<div class="a " style="left:1286px;top:430px;width:1px;height:18px;background:#000;"></div>
<div class="a " style="left:801px;top:430px;width:78px;height:1px;background:#000;"></div>
<div class="a " style="left:1036px;top:430px;width:302px;height:1px;background:#000;"></div>
<div class="a " style="left:26px;top:448px;width:1313px;height:1px;background:#9a9a9a;"></div>
<div class="a " style="left:123px;top:449px;width:1px;height:229px;background:#000;"></div>
<div class="a " style="left:192px;top:449px;width:1px;height:229px;background:#000;"></div>
<div class="a " style="left:340px;top:449px;width:1px;height:229px;background:#000;"></div>
<div class="a " style="left:470px;top:449px;width:1px;height:229px;background:#000;"></div>
<div class="a " style="left:539px;top:449px;width:1px;height:229px;background:#000;"></div>
<div class="a " style="left:608px;top:449px;width:1px;height:229px;background:#000;"></div>
<div class="a " style="left:674px;top:449px;width:1px;height:229px;background:#000;"></div>
<div class="a " style="left:740px;top:449px;width:1px;height:229px;background:#000;"></div>
<div class="a " style="left:801px;top:449px;width:1px;height:229px;background:#000;"></div>
<div class="a " style="left:879px;top:449px;width:1px;height:229px;background:#000;"></div>
<div class="a " style="left:961px;top:449px;width:1px;height:229px;background:#000;"></div>
<div class="a " style="left:1036px;top:449px;width:1px;height:229px;background:#000;"></div>
<div class="a " style="left:1088px;top:449px;width:1px;height:229px;background:#000;"></div>
<div class="a " style="left:1133px;top:449px;width:1px;height:229px;background:#000;"></div>
<div class="a " style="left:1190px;top:449px;width:1px;height:229px;background:#000;"></div>
<div class="a " style="left:1238px;top:449px;width:1px;height:229px;background:#000;"></div>
<div class="a " style="left:1286px;top:449px;width:1px;height:229px;background:#000;"></div>
<div class="a " style="left:26px;top:496px;width:1313px;height:1px;background:#000;"></div>
<div class="a " style="left:26px;top:544px;width:1313px;height:1px;background:#000;"></div>
<div class="a " style="left:26px;top:592px;width:1313px;height:1px;background:#000;"></div>
<div class="a " style="left:26px;top:640px;width:1313px;height:1px;background:#000;"></div>
<div class="a" style="left:26px;top:222px;width:314px;height:142px;overflow:hidden;"><div class="a t" style="left:-15.5px;top:48.2px;font-size:21.9px;line-height:21.9px;font-weight:bold;color:#1f7aa5;-webkit-text-stroke:0.8px #1f7aa5;letter-spacing:0px;transform:scaleX(1.03);">GAD</div><div class="a t" style="left:-13px;top:67.5px;font-size:19.5px;line-height:19.5px;font-weight:bold;color:#1f7aa5;-webkit-text-stroke:0.8px #1f7aa5;letter-spacing:0px;transform:scaleX(1.0);">PARROQUIAL</div><div class="a t" style="left:-10.5px;top:85.9px;font-size:29.6px;line-height:29.6px;font-weight:bold;color:#fdc830;-webkit-text-stroke:1.3px #fdc830;letter-spacing:0px;transform:scaleX(0.99);">VALLE</div><div class="a t" style="left:89px;top:85.9px;font-size:29.6px;line-height:29.6px;font-weight:bold;color:#1f6630;-webkit-text-stroke:1.3px #1f6630;letter-spacing:0px;transform:scaleX(0.985);">HERMOSO</div></div>
<div class="a " style="left:271px;top:292px;width:28px;height:4px;background:#fdc830;"></div>
<div class="a " style="left:271px;top:310px;width:40px;height:4px;background:#1f6630;"></div>
<div class="a " style="left:271px;top:328px;width:63px;height:4px;background:#1f7aa5;"></div>
<div class="a " style="left:323px;top:308px;width:17px;height:17px;background:#fafafa;border:1px solid #b1b1b1;background:linear-gradient(#ffffff,#ebebeb);"></div>
<svg style="left:327.5px;top:314.5px" width="8" height="5" viewBox="0 0 8 5"><path d="M0.3 0.3h7.4l-3.7 4.2z" fill="#6a6a6a"/></svg>
<div class="a " style="left:862px;top:308px;width:17px;height:17px;background:#fafafa;border:1px solid #b1b1b1;background:linear-gradient(#ffffff,#ebebeb);"></div>
<svg style="left:866.5px;top:314.5px" width="8" height="5" viewBox="0 0 8 5"><path d="M0.3 0.3h7.4l-3.7 4.2z" fill="#6a6a6a"/></svg>
<div class="a t" style="left:347.5px;top:277.0px;font-size:11.5px;line-height:15px;color:#000;font-weight:bold;letter-spacing:0.53px;-webkit-text-stroke:0.25px #000;">REGISTRO DE FACTURAS DE COMPRA Y RETENCIONES A PROVEEDORES DE AGOSTO</div>
<div class="a t" style="left:595.5px;top:293.2px;font-size:11.5px;line-height:15px;color:#000;font-weight:bold;transform:scaleX(1.075);-webkit-text-stroke:0.25px #000;">2024</div>
<div class="a t" style="left:898.0px;top:277.0px;font-size:10.5px;line-height:14px;color:#000;font-weight:bold;transform:scaleX(1.102);-webkit-text-stroke:0.25px #000;">Botellas</div>
<div class="a t" style="left:887.0px;top:293.0px;font-size:10.5px;line-height:14px;color:#000;font-weight:bold;transform:scaleX(1.063);-webkit-text-stroke:0.25px #000;">plásticas 1%</div>
<div class="a t" style="left:966.0px;top:229.0px;font-size:10.5px;line-height:14px;color:#000;font-weight:bold;transform:scaleX(1.120);-webkit-text-stroke:0.25px #000;">Actividades</div>
<div class="a t" style="left:992.5px;top:245.0px;font-size:10.5px;line-height:14px;color:#000;font-weight:bold;transform:scaleX(1.061);-webkit-text-stroke:0.25px #000;">de</div>
<div class="a t" style="left:966.0px;top:261.0px;font-size:10.5px;line-height:14px;color:#000;font-weight:bold;transform:scaleX(1.109);-webkit-text-stroke:0.25px #000;">construcció</div>
<div class="a t" style="left:972.0px;top:277.0px;font-size:10.5px;line-height:14px;color:#000;font-weight:bold;transform:scaleX(1.143);-webkit-text-stroke:0.25px #000;">n de obra</div>
<div class="a t" style="left:973.0px;top:293.0px;font-size:10.5px;line-height:14px;color:#000;font-weight:bold;transform:scaleX(1.128);-webkit-text-stroke:0.25px #000;">materias,</div>
<div class="a t" style="left:974.0px;top:309.0px;font-size:10.5px;line-height:14px;color:#000;font-weight:bold;transform:scaleX(1.085);-webkit-text-stroke:0.25px #000;">inmueble</div>
<div class="a t" style="left:966.0px;top:325.0px;font-size:10.5px;line-height:14px;color:#000;font-weight:bold;transform:scaleX(1.131);-webkit-text-stroke:0.25px #000;">urbanizació</div>
<div class="a t" style="left:977.0px;top:341.0px;font-size:10.5px;line-height:14px;color:#000;font-weight:bold;transform:scaleX(1.125);-webkit-text-stroke:0.25px #000;">n 1,75%</div>
<div class="a t" style="left:1041.5px;top:261.0px;font-size:10.5px;line-height:14px;color:#000;font-weight:bold;transform:scaleX(1.075);-webkit-text-stroke:0.25px #000;">Cuando</div>
<div class="a t" style="left:1043.5px;top:277.0px;font-size:10.5px;line-height:14px;color:#000;font-weight:bold;transform:scaleX(1.123);-webkit-text-stroke:0.25px #000;">no hay</div>
<div class="a t" style="left:1039.5px;top:293.0px;font-size:10.5px;line-height:14px;color:#000;font-weight:bold;transform:scaleX(1.126);-webkit-text-stroke:0.25px #000;">retenció</div>
<div class="a t" style="left:1059.0px;top:309.0px;font-size:10.5px;line-height:14px;color:#000;font-weight:bold;transform:scaleX(1.091);-webkit-text-stroke:0.25px #000;">n</div>
<div class="a t" style="left:1095.5px;top:237.0px;font-size:10.5px;line-height:14px;color:#000;font-weight:bold;transform:scaleX(1.041);-webkit-text-stroke:0.25px #000;">100 %</div>
<div class="a t" style="left:1093.5px;top:253.0px;font-size:10.5px;line-height:14px;color:#000;font-weight:bold;transform:scaleX(1.153);-webkit-text-stroke:0.25px #000;">y 1%.-</div>
<div class="a t" style="left:1093.5px;top:269.0px;font-size:10.5px;line-height:14px;color:#000;font-weight:bold;transform:scaleX(1.091);-webkit-text-stroke:0.25px #000;">Regim</div>
<div class="a t" style="left:1104.5px;top:285.0px;font-size:10.5px;line-height:14px;color:#000;font-weight:bold;transform:scaleX(1.061);-webkit-text-stroke:0.25px #000;">en</div>
<div class="a t" style="left:1095.5px;top:301.0px;font-size:10.5px;line-height:14px;color:#000;font-weight:bold;transform:scaleX(1.084);-webkit-text-stroke:0.25px #000;">micro</div>
<div class="a t" style="left:1094.5px;top:317.0px;font-size:10.5px;line-height:14px;color:#000;font-weight:bold;transform:scaleX(1.047);-webkit-text-stroke:0.25px #000;">mpres</div>
<div class="a t" style="left:1108.0px;top:333.0px;font-size:10.5px;line-height:14px;color:#000;font-weight:bold;transform:scaleX(1.028);-webkit-text-stroke:0.25px #000;">a</div>
<div class="a t" style="left:1136.0px;top:245.0px;font-size:10.5px;line-height:14px;color:#000;font-weight:bold;transform:scaleX(1.128);-webkit-text-stroke:0.25px #000;">Producto</div>
<div class="a t" style="left:1159.0px;top:261.0px;font-size:10.5px;line-height:14px;color:#000;font-weight:bold;transform:scaleX(1.028);-webkit-text-stroke:0.25px #000;">s</div>
<div class="a t" style="left:1136.5px;top:277.0px;font-size:10.5px;line-height:14px;color:#000;font-weight:bold;transform:scaleX(1.181);-webkit-text-stroke:0.25px #000;">agricoila</div>
<div class="a t" style="left:1153.5px;top:293.0px;font-size:10.5px;line-height:14px;color:#000;font-weight:bold;transform:scaleX(1.121);-webkit-text-stroke:0.25px #000;">s o</div>
<div class="a t" style="left:1140.0px;top:309.0px;font-size:10.5px;line-height:14px;color:#000;font-weight:bold;transform:scaleX(1.160);-webkit-text-stroke:0.25px #000;">Pecuari</div>
<div class="a t" style="left:1148.5px;top:325.0px;font-size:10.5px;line-height:14px;color:#000;font-weight:bold;transform:scaleX(1.128);-webkit-text-stroke:0.25px #000;">s 1%</div>
<div class="a t" style="left:1193.5px;top:245.0px;font-size:10.5px;line-height:14px;color:#000;font-weight:bold;transform:scaleX(1.125);-webkit-text-stroke:0.25px #000;">Transfe</div>
<div class="a t" style="left:1196.0px;top:261.0px;font-size:10.5px;line-height:14px;color:#000;font-weight:bold;transform:scaleX(1.196);-webkit-text-stroke:0.25px #000;">rencia</div>
<div class="a t" style="left:1208.0px;top:277.0px;font-size:10.5px;line-height:14px;color:#000;font-weight:bold;transform:scaleX(1.061);-webkit-text-stroke:0.25px #000;">de</div>
<div class="a t" style="left:1195.5px;top:293.0px;font-size:10.5px;line-height:14px;color:#000;font-weight:bold;transform:scaleX(1.142);-webkit-text-stroke:0.25px #000;">bienes</div>
<div class="a t" style="left:1194.5px;top:309.0px;font-size:10.5px;line-height:14px;color:#000;font-weight:bold;transform:scaleX(1.294);-webkit-text-stroke:0.25px #000;">muebl</div>
<div class="a t" style="left:1194.2px;top:325.0px;font-size:10.5px;line-height:14px;color:#000;font-weight:bold;transform:scaleX(1.054);-webkit-text-stroke:0.25px #000;">s 1,75%</div>
<div class="a t" style="left:1250.0px;top:245.0px;font-size:10.5px;line-height:14px;color:#000;font-weight:bold;transform:scaleX(1.127);-webkit-text-stroke:0.25px #000;">para</div>
<div class="a t" style="left:1254.5px;top:261.0px;font-size:10.5px;line-height:14px;color:#000;font-weight:bold;transform:scaleX(1.096);-webkit-text-stroke:0.25px #000;">las</div>
<div class="a t" style="left:1243.0px;top:277.0px;font-size:10.5px;line-height:14px;color:#000;font-weight:bold;transform:scaleX(1.133);-webkit-text-stroke:0.25px #000;">retenci</div>
<div class="a t" style="left:1249.0px;top:293.0px;font-size:10.5px;line-height:14px;color:#000;font-weight:bold;transform:scaleX(1.102);-webkit-text-stroke:0.25px #000;">ones</div>
<div class="a t" style="left:1253.2px;top:309.0px;font-size:10.5px;line-height:14px;color:#000;font-weight:bold;transform:scaleX(1.226);-webkit-text-stroke:0.25px #000;">del</div>
<div class="a t" style="left:1245.8px;top:325.0px;font-size:10.5px;line-height:14px;color:#000;font-weight:bold;transform:scaleX(1.122);-webkit-text-stroke:0.25px #000;">2,75%</div>
<div class="a t" style="left:1291.0px;top:261.0px;font-size:10.5px;line-height:14px;color:#000;font-weight:bold;transform:scaleX(1.101);-webkit-text-stroke:0.25px #000;">Servicio</div>
<div class="a t" style="left:1307.0px;top:277.0px;font-size:10.5px;line-height:14px;color:#000;font-weight:bold;transform:scaleX(1.061);-webkit-text-stroke:0.25px #000;">de</div>
<div class="a t" style="left:1290.5px;top:293.0px;font-size:10.5px;line-height:14px;color:#000;font-weight:bold;transform:scaleX(1.080);-webkit-text-stroke:0.25px #000;">transpor</div>
<div class="a t" style="left:1299.5px;top:309.0px;font-size:10.5px;line-height:14px;color:#000;font-weight:bold;transform:scaleX(1.021);-webkit-text-stroke:0.25px #000;">te 1%</div>
<div class="a " style="left:944px;top:308px;width:17px;height:17px;background:#fafafa;border:1px solid #b1b1b1;background:linear-gradient(#ffffff,#ebebeb);"></div>
<svg style="left:948.5px;top:314.5px" width="8" height="5" viewBox="0 0 8 5"><path d="M0.3 0.3h7.4l-3.7 4.2z" fill="#6a6a6a"/></svg>
<div class="a " style="left:1019px;top:308px;width:17px;height:17px;background:#fafafa;border:1px solid #b1b1b1;background:linear-gradient(#ffffff,#ebebeb);"></div>
<svg style="left:1023.5px;top:314.5px" width="8" height="5" viewBox="0 0 8 5"><path d="M0.3 0.3h7.4l-3.7 4.2z" fill="#6a6a6a"/></svg>
<div class="a " style="left:1071px;top:308px;width:17px;height:17px;background:#fafafa;border:1px solid #b1b1b1;background:linear-gradient(#ffffff,#ebebeb);"></div>
<svg style="left:1075.5px;top:314.5px" width="8" height="5" viewBox="0 0 8 5"><path d="M0.3 0.3h7.4l-3.7 4.2z" fill="#6a6a6a"/></svg>
<div class="a " style="left:1116px;top:308px;width:17px;height:17px;background:#fafafa;border:1px solid #b1b1b1;background:linear-gradient(#ffffff,#ebebeb);"></div>
<svg style="left:1120.5px;top:314.5px" width="8" height="5" viewBox="0 0 8 5"><path d="M0.3 0.3h7.4l-3.7 4.2z" fill="#6a6a6a"/></svg>
<div class="a " style="left:1173px;top:308px;width:17px;height:17px;background:#fafafa;border:1px solid #b1b1b1;background:linear-gradient(#ffffff,#ebebeb);"></div>
<svg style="left:1177.5px;top:314.5px" width="8" height="5" viewBox="0 0 8 5"><path d="M0.3 0.3h7.4l-3.7 4.2z" fill="#6a6a6a"/></svg>
<div class="a " style="left:1221px;top:308px;width:17px;height:17px;background:#fafafa;border:1px solid #b1b1b1;background:linear-gradient(#ffffff,#ebebeb);"></div>
<svg style="left:1225.5px;top:314.5px" width="8" height="5" viewBox="0 0 8 5"><path d="M0.3 0.3h7.4l-3.7 4.2z" fill="#6a6a6a"/></svg>
<div class="a " style="left:1269px;top:308px;width:17px;height:17px;background:#fafafa;border:1px solid #b1b1b1;background:linear-gradient(#ffffff,#ebebeb);"></div>
<svg style="left:1273.5px;top:314.5px" width="8" height="5" viewBox="0 0 8 5"><path d="M0.3 0.3h7.4l-3.7 4.2z" fill="#6a6a6a"/></svg>
<div class="a " style="left:1322px;top:308px;width:17px;height:17px;background:#fafafa;border:1px solid #b1b1b1;background:linear-gradient(#ffffff,#ebebeb);"></div>
<svg style="left:1326.5px;top:314.5px" width="8" height="5" viewBox="0 0 8 5"><path d="M0.3 0.3h7.4l-3.7 4.2z" fill="#6a6a6a"/></svg>
<div class="a t" style="left:903.5px;top:366.8px;font-size:12px;line-height:16px;color:#000;font-weight:bold;transform:scaleX(1.150);">343C</div>
<div class="a t" style="left:982.0px;top:366.8px;font-size:12px;line-height:16px;color:#000;font-weight:bold;transform:scaleX(1.150);">343B</div>
<div class="a t" style="left:1050.0px;top:366.8px;font-size:12px;line-height:16px;color:#000;font-weight:bold;transform:scaleX(1.199);">332</div>
<div class="a t" style="left:1098.5px;top:366.8px;font-size:12px;line-height:16px;color:#000;font-weight:bold;transform:scaleX(1.199);">343</div>
<div class="a t" style="left:1145.0px;top:366.8px;font-size:12px;line-height:16px;color:#000;font-weight:bold;transform:scaleX(1.150);">312A</div>
<div class="a t" style="left:1202.0px;top:366.8px;font-size:12px;line-height:16px;color:#000;font-weight:bold;transform:scaleX(1.199);">312</div>
<div class="a t" style="left:1246.0px;top:366.8px;font-size:12px;line-height:16px;color:#000;font-weight:bold;transform:scaleX(1.199);">3440</div>
<div class="a t" style="left:1300.0px;top:366.8px;font-size:12px;line-height:16px;color:#000;font-weight:bold;transform:scaleX(1.199);">310</div>
<div class="a t" style="left:672.5px;top:366.0px;font-size:12px;line-height:16px;color:#000;font-weight:bold;transform:scaleX(1.032);">TOTAL 332</div>
<div class="a t" style="left:822.0px;top:366.3px;font-size:12px;line-height:16px;color:#000;font-weight:bold;transform:scaleX(0.957);">#¡REF!</div>
<svg style="left:802px;top:365px" width="6" height="6" viewBox="0 0 6 6"><path d="M0 0h6L0 6z" fill="#1e7b3a"/></svg>
<div class="a t" style="left:55.5px;top:402.7px;font-size:9.5px;line-height:12px;color:#000;font-weight:bold;letter-spacing:0.77px;-webkit-text-stroke:0.3px #000;">Nº RUC</div>
<div class="a t" style="left:43px;top:417.3px;font-size:9.5px;line-height:12px;color:#000;font-weight:bold;letter-spacing:0.14px;-webkit-text-stroke:0.3px #000;">PROVEEDOR</div>
<div class="a t" style="left:146.8px;top:402.7px;font-size:9.5px;line-height:12px;color:#000;font-weight:bold;letter-spacing:0.51px;-webkit-text-stroke:0.3px #000;">TIPO</div>
<div class="a t" style="left:130px;top:417.3px;font-size:9.5px;line-height:12px;color:#000;font-weight:bold;letter-spacing:0.52px;-webkit-text-stroke:0.3px #000;">COMPROB.</div>
<div class="a t" style="left:227px;top:409.5px;font-size:9.5px;line-height:12px;color:#000;font-weight:bold;letter-spacing:0.51px;-webkit-text-stroke:0.3px #000;">AUTORIZACIÓN</div>
<div class="a t" style="left:374px;top:409.5px;font-size:9.5px;line-height:12px;color:#000;font-weight:bold;letter-spacing:0.14px;-webkit-text-stroke:0.3px #000;">PROVEEDOR</div>
<div class="a t" style="left:479px;top:409.5px;font-size:9.5px;line-height:12px;color:#000;font-weight:bold;letter-spacing:0.37px;-webkit-text-stroke:0.3px #000;">BASE 15%</div>
<div class="a t" style="left:551px;top:409.5px;font-size:9.5px;line-height:12px;color:#000;font-weight:bold;letter-spacing:0.18px;-webkit-text-stroke:0.3px #000;">BASE 5%</div>
<div class="a t" style="left:620px;top:409.5px;font-size:9.5px;line-height:12px;color:#000;font-weight:bold;letter-spacing:0.03px;-webkit-text-stroke:0.3px #000;">BASE 0%</div>
<div class="a t" style="left:689px;top:409.5px;font-size:9.5px;line-height:12px;color:#000;font-weight:bold;letter-spacing:0.89px;-webkit-text-stroke:0.3px #000;">IVA 5%</div>
<div class="a t" style="left:750px;top:409.5px;font-size:9.5px;line-height:12px;color:#000;font-weight:bold;letter-spacing:0.80px;-webkit-text-stroke:0.3px #000;">IVA 15%</div>
<div class="a t" style="left:811.7px;top:400.7px;font-size:9.5px;line-height:12px;color:#000;font-weight:bold;letter-spacing:0.20px;-webkit-text-stroke:0.3px #000;">SUBTO-TAL</div>
<div class="a t" style="left:831px;top:433.6px;font-size:9.5px;line-height:12px;color:#000;font-weight:bold;letter-spacing:0.90px;transform:scaleX(1.057);-webkit-text-stroke:0.3px #000;">332</div>
<div class="a t" style="left:904.6px;top:409.8px;font-size:9.5px;line-height:12px;color:#000;font-weight:bold;letter-spacing:0.12px;-webkit-text-stroke:0.3px #000;">TOTAL</div>
<div class="a t" style="left:992.8px;top:401.3px;font-size:9.5px;line-height:12px;color:#000;font-weight:bold;letter-spacing:0.90px;transform:scaleX(1.006);-webkit-text-stroke:0.3px #000;">Nº</div>
<div class="a t" style="left:970px;top:418.0px;font-size:9.5px;line-height:12px;color:#000;font-weight:bold;letter-spacing:0.23px;-webkit-text-stroke:0.3px #000;">RETENCION</div>
<div class="a t" style="left:1073.7px;top:400.3px;font-size:9.5px;line-height:12px;color:#000;font-weight:bold;letter-spacing:0.51px;-webkit-text-stroke:0.3px #000;">RETENCION IVA</div>
<div class="a t" style="left:1204.6px;top:400.3px;font-size:9.5px;line-height:12px;color:#000;font-weight:bold;letter-spacing:0.40px;-webkit-text-stroke:0.3px #000;">RETENCIÓN A LA RENTA</div>
<div class="a t" style="left:1064px;top:433.8px;font-size:9.5px;line-height:12px;color:#000;font-weight:bold;letter-spacing:0.33px;-webkit-text-stroke:0.3px #000;">10%</div>
<div class="a t" style="left:1110px;top:433.8px;font-size:9.5px;line-height:12px;color:#000;font-weight:bold;letter-spacing:0.33px;-webkit-text-stroke:0.3px #000;">70%</div>
<div class="a t" style="left:1159px;top:433.8px;font-size:9.5px;line-height:12px;color:#000;font-weight:bold;letter-spacing:0.83px;-webkit-text-stroke:0.3px #000;">100%</div>
<div class="a t" style="left:1212px;top:433.8px;font-size:9.5px;line-height:12px;color:#000;font-weight:bold;letter-spacing:0.63px;-webkit-text-stroke:0.3px #000;">COD</div>
<div class="a t" style="left:1256.5px;top:433.8px;font-size:9.5px;line-height:12px;color:#000;font-weight:bold;letter-spacing:0.05px;-webkit-text-stroke:0.3px #000;">%</div>
<div class="a t" style="left:1319px;top:433.8px;font-size:9.5px;line-height:12px;color:#000;font-weight:bold;letter-spacing:0.90px;-webkit-text-stroke:0.3px #000;">VAL</div>
<div class="a " style="left:1339px;top:431px;width:8px;height:17px;background:#e6e6e6;"></div>
<div class="a" style="left:0;top:449px;width:1339px;height:229px;overflow:hidden;"><div class="a" style="left:0;top:-449px;width:1339px;height:768px;">
<svg style="left:27px;top:449px" width="6" height="6" viewBox="0 0 6 6"><path d="M0 0h6L0 6z" fill="#1e7b3a"/></svg>
<svg style="left:193px;top:449px" width="6" height="6" viewBox="0 0 6 6"><path d="M0 0h6L0 6z" fill="#1e7b3a"/></svg>
<div class="a t" style="left:27.8px;top:464.5px;font-size:12px;line-height:16px;color:#000;transform:scaleX(1.035);">1760002600001</div>
<div class="a t" style="left:126px;top:464.5px;font-size:12px;line-height:16px;color:#000;transform:scaleX(0.849);">FACT. ELEC.</div>
<div class="a t" style="left:195px;top:449.0px;font-size:12px;line-height:16px;color:#000;transform:scaleX(1.051);">01082024011760002600</div>
<div class="a t" style="left:195px;top:465.0px;font-size:12px;line-height:16px;color:#000;transform:scaleX(1.044);">00120010620000903371</div>
<div class="a t" style="left:195px;top:481.0px;font-size:12px;line-height:16px;color:#000;transform:scaleX(1.044);">234567816</div>
<div class="a t" style="left:343.5px;top:449.0px;font-size:12px;line-height:16px;color:#000;transform:scaleX(0.842);">BANCO CENTRAL DEL</div>
<div class="a t" style="left:343.5px;top:465.0px;font-size:12px;line-height:16px;color:#000;transform:scaleX(0.850);">ECUADOR</div>
<div class="a t" style="left:493.3px;top:464.5px;font-size:12px;line-height:16px;color:#000;">0.00</div>
<div class="a t" style="left:562.3px;top:464.5px;font-size:12px;line-height:16px;color:#000;">0.00</div>
<div class="a t" style="left:629.8px;top:464.5px;font-size:12px;line-height:16px;color:#000;">0.20</div>
<div class="a t" style="left:695.8px;top:464.5px;font-size:12px;line-height:16px;color:#000;">0.00</div>
<div class="a t" style="left:759.3px;top:464.5px;font-size:12px;line-height:16px;color:#000;">0.00</div>
<div class="a t" style="left:828.8px;top:464.5px;font-size:12px;line-height:16px;color:#000;">0.20</div>
<div class="a t" style="left:908.8px;top:464.5px;font-size:12px;line-height:16px;color:#000;">0.20</div>
<div class="a t" style="left:977.5px;top:464.5px;font-size:12px;line-height:16px;color:#000;transform:scaleX(0.851);">SIN RET.</div>
<div class="a t" style="left:1150.3px;top:464.5px;font-size:12px;line-height:16px;color:#000;">0.00</div>
<div class="a t" style="left:1204.3px;top:464.5px;font-size:12px;line-height:16px;color:#000;transform:scaleX(1.019);">332</div>
<div class="a t" style="left:1246.2px;top:464.5px;font-size:12px;line-height:16px;color:#000;transform:scaleX(0.958);">0.00%</div>
<div class="a t" style="left:1302.3px;top:464.5px;font-size:12px;line-height:16px;color:#000;">0.00</div>
<svg style="left:27px;top:497px" width="6" height="6" viewBox="0 0 6 6"><path d="M0 0h6L0 6z" fill="#1e7b3a"/></svg>
<svg style="left:193px;top:497px" width="6" height="6" viewBox="0 0 6 6"><path d="M0 0h6L0 6z" fill="#1e7b3a"/></svg>
<div class="a t" style="left:27.8px;top:512.5px;font-size:12px;line-height:16px;color:#000;transform:scaleX(1.035);">1768152560001</div>
<div class="a t" style="left:126px;top:512.5px;font-size:12px;line-height:16px;color:#000;transform:scaleX(0.849);">FACT. ELEC.</div>
<div class="a t" style="left:195px;top:497.0px;font-size:12px;line-height:16px;color:#000;transform:scaleX(1.051);">03082024011768152560</div>
<div class="a t" style="left:195px;top:513.0px;font-size:12px;line-height:16px;color:#000;transform:scaleX(1.044);">00120017772292046390</div>
<div class="a t" style="left:195px;top:529.0px;font-size:12px;line-height:16px;color:#000;transform:scaleX(1.044);">308202416</div>
<div class="a t" style="left:343.5px;top:497.0px;font-size:12px;line-height:16px;color:#000;transform:scaleX(0.871);">CORPORACION</div>
<div class="a t" style="left:343.5px;top:513.0px;font-size:12px;line-height:16px;color:#000;transform:scaleX(0.865);">NACIONAL DE</div>
<div class="a t" style="left:343.5px;top:529.0px;font-size:12px;line-height:16px;color:#000;transform:scaleX(0.863);">TELECOMUNICACIONES</div>
<div class="a t" style="left:493.3px;top:512.5px;font-size:12px;line-height:16px;color:#000;">6.20</div>
<div class="a t" style="left:562.3px;top:512.5px;font-size:12px;line-height:16px;color:#000;">0.00</div>
<div class="a t" style="left:629.8px;top:512.5px;font-size:12px;line-height:16px;color:#000;">0.00</div>
<div class="a t" style="left:695.8px;top:512.5px;font-size:12px;line-height:16px;color:#000;">0.00</div>
<div class="a t" style="left:759.3px;top:512.5px;font-size:12px;line-height:16px;color:#000;">0.93</div>
<div class="a t" style="left:828.8px;top:512.5px;font-size:12px;line-height:16px;color:#000;">6.20</div>
<div class="a t" style="left:908.8px;top:512.5px;font-size:12px;line-height:16px;color:#000;">7.13</div>
<div class="a t" style="left:1150.3px;top:512.5px;font-size:12px;line-height:16px;color:#000;">0.93</div>
<div class="a t" style="left:1204.3px;top:512.5px;font-size:12px;line-height:16px;color:#000;transform:scaleX(1.019);">332</div>
<div class="a t" style="left:1246.2px;top:512.5px;font-size:12px;line-height:16px;color:#000;transform:scaleX(0.958);">0.00%</div>
<div class="a t" style="left:1302.3px;top:512.5px;font-size:12px;line-height:16px;color:#000;">0.00</div>
<svg style="left:27px;top:545px" width="6" height="6" viewBox="0 0 6 6"><path d="M0 0h6L0 6z" fill="#1e7b3a"/></svg>
<svg style="left:193px;top:545px" width="6" height="6" viewBox="0 0 6 6"><path d="M0 0h6L0 6z" fill="#1e7b3a"/></svg>
<div class="a t" style="left:27.8px;top:560.5px;font-size:12px;line-height:16px;color:#000;transform:scaleX(1.035);">1768152560001</div>
<div class="a t" style="left:126px;top:560.5px;font-size:12px;line-height:16px;color:#000;transform:scaleX(0.849);">FACT. ELEC.</div>
<div class="a t" style="left:195px;top:545.0px;font-size:12px;line-height:16px;color:#000;transform:scaleX(1.051);">03082024011768152560</div>
<div class="a t" style="left:195px;top:561.0px;font-size:12px;line-height:16px;color:#000;transform:scaleX(1.044);">00120017772292046380</div>
<div class="a t" style="left:195px;top:577.0px;font-size:12px;line-height:16px;color:#000;transform:scaleX(1.044);">308202410</div>
<div class="a t" style="left:343.5px;top:545.0px;font-size:12px;line-height:16px;color:#000;transform:scaleX(0.871);">CORPORACION</div>
<div class="a t" style="left:343.5px;top:561.0px;font-size:12px;line-height:16px;color:#000;transform:scaleX(0.865);">NACIONAL DE</div>
<div class="a t" style="left:343.5px;top:577.0px;font-size:12px;line-height:16px;color:#000;transform:scaleX(0.863);">TELECOMUNICACIONES</div>
<div class="a t" style="left:493.3px;top:560.5px;font-size:12px;line-height:16px;color:#000;">6.20</div>
<div class="a t" style="left:562.3px;top:560.5px;font-size:12px;line-height:16px;color:#000;">0.00</div>
<div class="a t" style="left:629.8px;top:560.5px;font-size:12px;line-height:16px;color:#000;">0.00</div>
<div class="a t" style="left:695.8px;top:560.5px;font-size:12px;line-height:16px;color:#000;">0.00</div>
<div class="a t" style="left:759.3px;top:560.5px;font-size:12px;line-height:16px;color:#000;">0.93</div>
<div class="a t" style="left:828.8px;top:560.5px;font-size:12px;line-height:16px;color:#000;">6.20</div>
<div class="a t" style="left:908.8px;top:560.5px;font-size:12px;line-height:16px;color:#000;">7.13</div>
<div class="a t" style="left:1150.3px;top:560.5px;font-size:12px;line-height:16px;color:#000;">0.93</div>
<div class="a t" style="left:1204.3px;top:560.5px;font-size:12px;line-height:16px;color:#000;transform:scaleX(1.019);">332</div>
<div class="a t" style="left:1246.2px;top:560.5px;font-size:12px;line-height:16px;color:#000;transform:scaleX(0.958);">0.00%</div>
<div class="a t" style="left:1302.3px;top:560.5px;font-size:12px;line-height:16px;color:#000;">0.00</div>
<svg style="left:27px;top:593px" width="6" height="6" viewBox="0 0 6 6"><path d="M0 0h6L0 6z" fill="#1e7b3a"/></svg>
<svg style="left:193px;top:593px" width="6" height="6" viewBox="0 0 6 6"><path d="M0 0h6L0 6z" fill="#1e7b3a"/></svg>
<div class="a t" style="left:27.8px;top:608.5px;font-size:12px;line-height:16px;color:#000;transform:scaleX(1.035);">1760002600001</div>
<div class="a t" style="left:126px;top:608.5px;font-size:12px;line-height:16px;color:#000;transform:scaleX(0.849);">FACT. ELEC.</div>
<div class="a t" style="left:195px;top:593.0px;font-size:12px;line-height:16px;color:#000;transform:scaleX(1.051);">07082024011760002600</div>
<div class="a t" style="left:195px;top:609.0px;font-size:12px;line-height:16px;color:#000;transform:scaleX(1.044);">00120010620000926601</div>
<div class="a t" style="left:195px;top:625.0px;font-size:12px;line-height:16px;color:#000;transform:scaleX(1.044);">234567816</div>
<div class="a t" style="left:343.5px;top:593.0px;font-size:12px;line-height:16px;color:#000;transform:scaleX(0.842);">BANCO CENTRAL DEL</div>
<div class="a t" style="left:343.5px;top:609.0px;font-size:12px;line-height:16px;color:#000;transform:scaleX(0.850);">ECUADOR</div>
<div class="a t" style="left:493.3px;top:608.5px;font-size:12px;line-height:16px;color:#000;">0.00</div>
<div class="a t" style="left:562.3px;top:608.5px;font-size:12px;line-height:16px;color:#000;">0.00</div>
<div class="a t" style="left:629.8px;top:608.5px;font-size:12px;line-height:16px;color:#000;">0.05</div>
<div class="a t" style="left:695.8px;top:608.5px;font-size:12px;line-height:16px;color:#000;">0.00</div>
<div class="a t" style="left:759.3px;top:608.5px;font-size:12px;line-height:16px;color:#000;">0.00</div>
<div class="a t" style="left:828.8px;top:608.5px;font-size:12px;line-height:16px;color:#000;">0.05</div>
<div class="a t" style="left:908.8px;top:608.5px;font-size:12px;line-height:16px;color:#000;">0.05</div>
<div class="a t" style="left:977.5px;top:608.5px;font-size:12px;line-height:16px;color:#000;transform:scaleX(0.851);">SIN RET.</div>
<div class="a t" style="left:1150.3px;top:608.5px;font-size:12px;line-height:16px;color:#000;">0.00</div>
<div class="a t" style="left:1204.3px;top:608.5px;font-size:12px;line-height:16px;color:#000;transform:scaleX(1.019);">332</div>
<div class="a t" style="left:1246.2px;top:608.5px;font-size:12px;line-height:16px;color:#000;transform:scaleX(0.958);">0.00%</div>
<div class="a t" style="left:1302.3px;top:608.5px;font-size:12px;line-height:16px;color:#000;">0.00</div>
<svg style="left:27px;top:641px" width="6" height="6" viewBox="0 0 6 6"><path d="M0 0h6L0 6z" fill="#1e7b3a"/></svg>
<svg style="left:193px;top:641px" width="6" height="6" viewBox="0 0 6 6"><path d="M0 0h6L0 6z" fill="#1e7b3a"/></svg>
<div class="a t" style="left:27.8px;top:656.5px;font-size:12px;line-height:16px;color:#000;transform:scaleX(1.035);">1760002600001</div>
<div class="a t" style="left:126px;top:656.5px;font-size:12px;line-height:16px;color:#000;transform:scaleX(0.849);">FACT. ELEC.</div>
<div class="a t" style="left:195px;top:641.0px;font-size:12px;line-height:16px;color:#000;transform:scaleX(1.051);">07082024011760002600</div>
<div class="a t" style="left:195px;top:657.0px;font-size:12px;line-height:16px;color:#000;transform:scaleX(1.044);">00120010620000934731</div>
<div class="a t" style="left:195px;top:673.0px;font-size:12px;line-height:16px;color:#000;transform:scaleX(1.044);">234567816</div>
<div class="a t" style="left:343.5px;top:641.0px;font-size:12px;line-height:16px;color:#000;transform:scaleX(0.842);">BANCO CENTRAL DEL</div>
<div class="a t" style="left:343.5px;top:657.0px;font-size:12px;line-height:16px;color:#000;transform:scaleX(0.850);">ECUADOR</div>
<div class="a t" style="left:493.3px;top:656.5px;font-size:12px;line-height:16px;color:#000;">0.00</div>
<div class="a t" style="left:562.3px;top:656.5px;font-size:12px;line-height:16px;color:#000;">0.00</div>
<div class="a t" style="left:629.8px;top:656.5px;font-size:12px;line-height:16px;color:#000;">0.25</div>
<div class="a t" style="left:695.8px;top:656.5px;font-size:12px;line-height:16px;color:#000;">0.00</div>
<div class="a t" style="left:759.3px;top:656.5px;font-size:12px;line-height:16px;color:#000;">0.00</div>
<div class="a t" style="left:828.8px;top:656.5px;font-size:12px;line-height:16px;color:#000;">0.25</div>
<div class="a t" style="left:908.8px;top:656.5px;font-size:12px;line-height:16px;color:#000;">0.25</div>
<div class="a t" style="left:977.5px;top:656.5px;font-size:12px;line-height:16px;color:#000;transform:scaleX(0.851);">SIN RET.</div>
<div class="a t" style="left:1150.3px;top:656.5px;font-size:12px;line-height:16px;color:#000;">0.00</div>
<div class="a t" style="left:1204.3px;top:656.5px;font-size:12px;line-height:16px;color:#000;transform:scaleX(1.019);">332</div>
<div class="a t" style="left:1246.2px;top:656.5px;font-size:12px;line-height:16px;color:#000;transform:scaleX(0.958);">0.00%</div>
<div class="a t" style="left:1302.3px;top:656.5px;font-size:12px;line-height:16px;color:#000;">0.00</div>
</div></div>
<div class="a " style="left:1189px;top:543px;width:51px;height:51px;border:2px solid #217346;"></div>
<div class="a " style="left:1236px;top:590px;width:6px;height:6px;background:#217346;border:1px solid #fff;border-right:none;border-bottom:none;"></div>
<div class="a " style="left:1239px;top:574px;width:17px;height:17px;background:#fafafa;border:1px solid #b1b1b1;background:linear-gradient(#ffffff,#ebebeb);"></div>
<svg style="left:1243.5px;top:580.5px" width="8" height="5" viewBox="0 0 8 5"><path d="M0.3 0.3h7.4l-3.7 4.2z" fill="#6a6a6a"/></svg>
<div class="a " style="left:1340px;top:203px;width:20px;height:475px;background:#e6e6e6;"></div>
<div class="a " style="left:1342px;top:221px;width:16px;height:440px;background:#f0f0f0;"></div>
<div class="a " style="left:1342px;top:205px;width:16px;height:15px;background:#fff;border:1px solid #ababab;"></div>
<svg style="left:1346px;top:209px" width="8" height="5" viewBox="0 0 8 5"><path d="M4 0l4 5H0z" fill="#444"/></svg>
<div class="a " style="left:1342px;top:220px;width:16px;height:81px;background:#fff;border:1px solid #ababab;"></div>
<div class="a " style="left:1342px;top:662px;width:16px;height:15px;background:#fff;border:1px solid #ababab;"></div>
<svg style="left:1346px;top:668px" width="8" height="5" viewBox="0 0 8 5"><path d="M0 0h8l-4 5z" fill="#444"/></svg>
<div class="a " style="left:0px;top:678px;width:1360px;height:28px;background:#e6e6e6;"></div>
<div class="a " style="left:0px;top:678px;width:1339px;height:1px;background:#9f9f9f;"></div>
<div class="a " style="left:0px;top:706px;width:1360px;height:1px;background:#c8c8c8;"></div>
<svg style="left:27px;top:687px" width="5" height="8" viewBox="0 0 5 8"><path d="M5 0v8L0 4z" fill="#217346"/></svg>
<svg style="left:55px;top:687px" width="5" height="8" viewBox="0 0 5 8"><path d="M0 0v8l5-4z" fill="#217346"/></svg>
<div class="a " style="left:80px;top:695px;width:2px;height:2px;background:#217346;"></div>
<div class="a " style="left:84.5px;top:695px;width:2px;height:2px;background:#217346;"></div>
<div class="a " style="left:89px;top:695px;width:2px;height:2px;background:#217346;"></div>
<div class="a " style="left:100px;top:683px;width:1px;height:18px;background:#bdbdbd;"></div>
<div class="a " style="left:192px;top:683px;width:1px;height:18px;background:#bdbdbd;"></div>
<div class="a " style="left:287px;top:683px;width:1px;height:18px;background:#bdbdbd;"></div>
<div class="a " style="left:382px;top:683px;width:1px;height:18px;background:#bdbdbd;"></div>
<div class="a t" style="left:114px;top:683.0px;font-size:13px;line-height:17px;color:#444;transform:scaleX(0.912);">ABRIL 2024</div>
<div class="a t" style="left:205px;top:683.0px;font-size:13px;line-height:17px;color:#444;transform:scaleX(0.981);">MAYO 2024</div>
<div class="a t" style="left:300px;top:683.0px;font-size:13px;line-height:17px;color:#444;transform:scaleX(0.958);">JUNIO 2024</div>
<div class="a t" style="left:395px;top:683.0px;font-size:13px;line-height:17px;color:#444;transform:scaleX(0.930);">JULIO 2024</div>
<div class="a " style="left:474px;top:678px;width:110px;height:25px;background:#fff;border-left:1px solid #c6c6c6;border-right:1px solid #c6c6c6;"></div>
<div class="a " style="left:474px;top:701px;width:110px;height:2px;background:#217346;"></div>
<div class="a t" style="left:486px;top:683.0px;font-size:13px;line-height:17px;color:#217346;font-weight:bold;transform:scaleX(0.959);">AGOSTO 2024</div>
<div class="a" style="left:597px;top:680px;width:64.500px;height:24px;overflow:hidden;">
<div class="a t" style="left:0;top:3px;font-size:13px;line-height:17px;color:#444;transform:scaleX(0.905);">SEPTIEMBRE 2024</div></div>
<div class="a " style="left:668px;top:695px;width:2px;height:2px;background:#217346;"></div>
<div class="a " style="left:672.5px;top:695px;width:2px;height:2px;background:#217346;"></div>
<div class="a " style="left:677px;top:695px;width:2px;height:2px;background:#217346;"></div>
<svg style="left:693px;top:684px" width="16" height="16" viewBox="0 0 16 16"><circle cx="8" cy="8" r="7.2" fill="none" stroke="#777" stroke-width="1"/><path d="M4.5 8h7M8 4.5v7" stroke="#666" stroke-width="1.3"/></svg>
<div class="a " style="left:729px;top:687px;width:2px;height:2px;background:#b5b5b5;"></div>
<div class="a " style="left:729px;top:691px;width:2px;height:2px;background:#b5b5b5;"></div>
<div class="a " style="left:729px;top:695px;width:2px;height:2px;background:#b5b5b5;"></div>
<div class="a " style="left:746px;top:685px;width:590px;height:15px;background:#f0f0f0;"></div>
<div class="a " style="left:746px;top:685px;width:15px;height:15px;background:#fff;border:1px solid #ababab;"></div>
<svg style="left:751px;top:689px" width="5" height="8" viewBox="0 0 5 8"><path d="M5 0v8L0 4z" fill="#222"/></svg>
<div class="a " style="left:861px;top:685px;width:380px;height:15px;background:#fff;border:1px solid #ababab;"></div>
<div class="a " style="left:1321px;top:685px;width:15px;height:15px;background:#fff;border:1px solid #ababab;"></div>
<svg style="left:1326px;top:689px" width="5" height="8" viewBox="0 0 5 8"><path d="M0 0v8l5-4z" fill="#222"/></svg>
<div class="a " style="left:0px;top:707px;width:1360px;height:21px;background:#f3f3f3;"></div>
<div class="a t" style="left:12px;top:709.5px;font-size:11.5px;line-height:15px;color:#444;transform:scaleX(0.967);">Listo</div>
<svg style="left:78px;top:709px" width="17" height="16" viewBox="0 0 17 16"><path d="M7 1.5a6 6 0 1 0 6 7" fill="none" stroke="#555" stroke-width="1.1" stroke-dasharray="3 1.6"/><path d="M7 3v5l2.2 2.2" fill="none" stroke="#555" stroke-width="1"/><path d="M9 7l6.5 7M15.5 7 9 14" stroke="#444" stroke-width="1.7"/></svg>
<div class="a t" style="left:98px;top:709.5px;font-size:11.5px;line-height:15px;color:#333;font-weight:bold;transform:scaleX(0.914);">Accesibilidad: es necesario investigar</div>
<div class="a " style="left:1066px;top:707px;width:40px;height:21px;background:#c8c8c8;"></div>
<svg style="left:1079px;top:710px" width="14" height="14" viewBox="0 0 14 14"><path d="M0.5 0.5h13v13H0.5zM0.5 4.8h13M0.5 9.2h13M4.8 0.5v13M9.2 0.5v13" fill="none" stroke="#555" stroke-width="1"/></svg>
<svg style="left:1119px;top:710px" width="15" height="14" viewBox="0 0 15 14"><rect x="0.5" y="0.5" width="14" height="13" fill="none" stroke="#555"/><rect x="3.5" y="3.5" width="8" height="7" fill="none" stroke="#555"/><path d="M5 6h5M5 8h5" stroke="#555"/></svg>
<svg style="left:1159px;top:710px" width="15" height="14" viewBox="0 0 15 14"><path d="M0.5 0.5h14v13H0.5zM4.5 0.5v7M10.5 0.5v7M4.5 7.5h6" fill="none" stroke="#555" stroke-width="1"/></svg>
<div class="a " style="left:1192px;top:717px;width:7px;height:1px;background:#444;"></div>
<div class="a " style="left:1205px;top:717px;width:100px;height:1px;background:#555;"></div>
<div class="a " style="left:1250px;top:712px;width:5px;height:11px;background:#444;"></div>
<div class="a " style="left:1310px;top:717px;width:8px;height:1px;background:#444;"></div>
<div class="a " style="left:1313.5px;top:713.5px;width:1px;height:8px;background:#444;"></div>
<div class="a t" style="left:1331px;top:709.5px;font-size:11.5px;line-height:15px;color:#333;transform:scaleX(0.934);">95%</div>
<div class="a " style="left:0px;top:728px;width:1360px;height:40px;background:#101010;"></div>
<div class="a " style="left:16px;top:740px;width:7.5px;height:7.5px;background:#fff;"></div>
<div class="a " style="left:24.5px;top:740px;width:7.5px;height:7.5px;background:#fff;"></div>
<div class="a " style="left:16px;top:748.5px;width:7.5px;height:7.5px;background:#fff;"></div>
<div class="a " style="left:24.5px;top:748.5px;width:7.5px;height:7.5px;background:#fff;"></div>
<svg style="left:16px;top:740px" width="16" height="16" viewBox="0 0 17 17"><path d="M0 0 0 2.2 17 0z" fill="#101010"/><path d="M0 17 0 14.8 17 17z" fill="#101010"/></svg>
<div class="a " style="left:48px;top:728px;width:344px;height:40px;background:#f3f3f3;"></div>
<svg style="left:59px;top:739px" width="18" height="18" viewBox="0 0 18 18"><circle cx="11" cy="7" r="5.3" fill="none" stroke="#333" stroke-width="1.3"/><path d="M7 11 1 17" stroke="#333" stroke-width="1.4"/></svg>
<div class="a t" style="left:88px;top:738.0px;font-size:15px;line-height:20px;color:#3a3a3a;transform:scaleX(0.968);">Escribe aquí para buscar</div>
<svg style="left:300px;top:725px" width="260" height="43" viewBox="0 0 1360 225"><defs><linearGradient id="hg" x1="0" y1="0" x2="1" y2="0"><stop offset="0" stop-color="#8db43a"/><stop offset="0.55" stop-color="#5f8f2a"/><stop offset="1" stop-color="#2f5f1f"/></linearGradient></defs><path d="M70 225C110 172 230 152 330 160c90 8 140 35 152 65z" fill="url(#hg)"/><path d="M318 148c25 28 62 42 122 44-40 10-92 4-132-18z" fill="#b9773f"/><path d="M213 96c35-16 97-2 122 54 6 26-14 46-50 50l-42 1c-6-10 8-16 22-16-22-16-43-46-52-89z" fill="#c98a58"/><path d="M250 186c20-4 45-2 62 8l-68 8c-3-6 0-12 6-16z" fill="#b9773f"/><path d="M168 94c3-24 27-44 58-36 22 8 22 38 1 48-21 8-37-4-59-6z" fill="#cf9160"/><path d="M183 60c-6-18 1-34 10-42 10 12 12 28 10 42z" fill="#c98a58"/><path d="M188 56c-3-12 0-22 5-29 5 9 6 19 5 29z" fill="#e8a6a0"/><path d="M212 60c2-18 12-33 25-39 3 15-2 31-10 42z" fill="#c98a58"/><path d="M217 58c2-12 8-22 15-28 1 11-2 21-8 29z" fill="#e8a6a0"/><path d="M217 104c7 26 17 52 33 68-10-22-15-46-18-68z" fill="#ead2b4"/><path d="M229 124c-7 15-4 31 6 39 5-12 5-25 3-36z" fill="#a96c3b"/><circle cx="199" cy="76" r="5" fill="#2a1a10"/><circle cx="172" cy="95" r="4" fill="#3a2418"/></svg>
<div class="a " style="left:48px;top:728px;width:344px;height:1px;background:#c6c6c6;"></div>
<div class="a " style="left:48px;top:767px;width:344px;height:1px;background:#c6c6c6;"></div>
<div class="a " style="left:493px;top:728px;width:48px;height:40px;background:#373737;"></div>
<svg style="left:406px;top:735px" width="26" height="26" viewBox="0 0 26 26"><defs><linearGradient id="eg" x1="0.1" y1="0.2" x2="0.8" y2="1"><stop offset="0" stop-color="#2aa9e8"/><stop offset="1" stop-color="#0b4f9c"/></linearGradient><linearGradient id="eg2" x1="0" y1="1" x2="1" y2="0"><stop offset="0" stop-color="#2bb6e6"/><stop offset="1" stop-color="#5bd46a"/></linearGradient></defs><circle cx="13" cy="13" r="12.3" fill="url(#eg)"/><path d="M1.2 10.500C3.500 3 11 -0.500 18 1.800c5 2 7.500 6.500 7.200 11-.2 3-2.400 4.800-5.500 4.800h-4c1.500-1.200 2-2.600 1.800-4-.4-2.800-3-4.800-6.300-4.800-3.800 0-7.500 1.200-10 1.700z" fill="url(#eg2)"/><path d="M9.800 12.500c-.6 4.500 2.500 8.800 7.500 9.500 2.800.4 5.300-.5 7-2.200-2.600 1-5.800.7-7.800-1-1.800-1.600-2.300-3.800-1.200-5.500.6-1 .2-2-1-2.500-2-.8-4.200.2-4.500 1.700z" fill="#0b3f88"/><path d="M15.300 13.300c-.9 1.600-.5 3.600 1 5 1.800 1.500 4.700 1.900 7.200 1 1-1 1.800-2.200 2.300-3.600-.9 1.200-2.300 1.900-4 1.900h-4c1-1 1.600-2.200 1.500-3.500-.9-1.300-3.200-1.800-4-.8z" fill="#101010"/></svg>
<svg style="left:456px;top:737px" width="24" height="22" viewBox="0 0 24 22"><path d="M1 3h8l2 2h12v15H1z" fill="#f0b93a"/><path d="M1 7h22v13H1z" fill="#fbd66a"/><path d="M5 13h14v7H5z" fill="#3f8fd8"/><path d="M8 16h8v4H8z" fill="#fbd66a"/></svg>
<div class="a " style="left:448px;top:765px;width:32px;height:3px;background:#76b9ed;"></div>
<div class="a " style="left:481px;top:765px;width:7px;height:3px;background:#5f8db3;"></div>
<svg style="left:504px;top:736px" width="25" height="24" viewBox="0 0 25 24"><rect x="7" y="1" width="17" height="22" rx="1.5" fill="#21a366"/><rect x="7" y="1" width="8.500" height="11" fill="#107c41"/><rect x="15.500" y="1" width="8.500" height="5.500" fill="#33c481"/><rect x="15.500" y="12" width="8.500" height="5.500" fill="#107c41"/><rect x="7" y="17.500" width="17" height="5.500" fill="#185c37"/><rect x="0.500" y="5.500" width="13" height="13" rx="1.200" fill="#107c41"/><path d="M4 8.500l6 7M10 8.500l-6 7" stroke="#fff" stroke-width="1.800"/></svg>
<div class="a " style="left:493px;top:765px;width:48px;height:3px;background:#76b9ed;"></div>
<svg style="left:552px;top:734px" width="27" height="27" viewBox="0 0 27 27"><defs><radialGradient id="fg" cx="0.6" cy="0.2" r="0.9"><stop offset="0" stop-color="#ffde3a"/><stop offset="0.5" stop-color="#ff8a16"/><stop offset="1" stop-color="#e82a5c"/></radialGradient></defs><path d="M13.500 3c2-1 3-2.500 3-3 3 2 5 5 5 7 3 2 4.500 5 4.500 8.500A12.500 12.500 0 0 1 1 15.500C1 11 3 8 4 7c0-2 .5-3 1-4 1 1.500 2 2.500 3.500 3 1.500-2 3-3 5-3z" fill="url(#fg)"/><circle cx="13" cy="15" r="6.500" fill="#7a3fd0"/><path d="M7 14c2-3 6-4 9-2-2 0-3 1-3 2.500s1.500 2.500 3 2.500c-3 2.500-8 1-9-3z" fill="#ff9a1f"/></svg>
<svg style="left:602px;top:735.5px" width="25" height="25" viewBox="0 0 26 26"><circle cx="13" cy="13" r="12.500" fill="#fff"/><path d="M13 0.5a12.500 12.500 0 0 1 10.800 6.250H13a6.250 6.250 0 0 0-5.400 3.100L2.200 6.750A12.500 12.500 0 0 1 13 0.500z" fill="#e33b2e"/><path d="M23.800 6.750a12.500 12.500 0 0 1-10.800 18.750l5.400-9.350a6.250 6.250 0 0 0 0-6.250z" fill="#fcc31e"/><path d="M13 25.500A12.500 12.500 0 0 1 2.200 6.750l5.400 9.400a6.250 6.250 0 0 0 5.400 3.100l2.700-.7z" fill="#2ba24c"/><circle cx="13" cy="13" r="5.600" fill="#fff"/><circle cx="13" cy="13" r="4.500" fill="#3f7fe8"/></svg>
<svg style="left:651px;top:736px" width="26" height="24.500" viewBox="0 0 25 24"><rect x="7" y="1" width="17" height="22" rx="1.500" fill="#2b7cd3"/><rect x="7" y="1" width="17" height="5.500" fill="#41a5ee"/><rect x="7" y="12" width="17" height="5.500" fill="#185abd"/><rect x="7" y="17.500" width="17" height="5.500" fill="#103f91"/><rect x="0.500" y="5.500" width="13" height="13" rx="1.200" fill="#185abd"/><path d="M3 8.500l1.800 7 2.200-6 2.200 6 1.800-7" fill="none" stroke="#fff" stroke-width="1.500"/></svg>
<svg style="left:701px;top:735.5px" width="25" height="25" viewBox="0 0 26 26"><circle cx="13" cy="13" r="12.500" fill="#fff"/><path d="M13 0.5a12.500 12.500 0 0 1 10.800 6.250H13a6.250 6.250 0 0 0-5.400 3.100L2.200 6.750A12.500 12.500 0 0 1 13 0.500z" fill="#e33b2e"/><path d="M23.800 6.750a12.500 12.500 0 0 1-10.800 18.750l5.400-9.350a6.250 6.250 0 0 0 0-6.250z" fill="#fcc31e"/><path d="M13 25.500A12.500 12.500 0 0 1 2.200 6.750l5.400 9.400a6.250 6.250 0 0 0 5.400 3.100l2.700-.7z" fill="#2ba24c"/><circle cx="13" cy="13" r="5.600" fill="#fff"/><circle cx="13" cy="13" r="4.500" fill="#3f7fe8"/></svg>
<div class="a " style="left:712px;top:746px;width:14px;height:14px;background:#c9d3dc;border-radius:7px;border:1px solid #eee;"></div>
<div class="a " style="left:716px;top:749px;width:5px;height:8px;background:#6b5a48;border-radius:2px;"></div>
<div class="a " style="left:693px;top:765px;width:40px;height:3px;background:#76b9ed;"></div>
<svg style="left:749px;top:735px" width="28" height="26" viewBox="0 0 28 26"><path d="M11 4c7 0 12 4 12 9.500 0 3-2 4.500-5 4.500-2 0-3 1-2.500 3 .4 1.500-1 3-4 3C5 24 1 19.500 1 14S5 4 11 4z" fill="#dfe6ee" stroke="#9fb2c6" stroke-width="0.800"/><circle cx="6.500" cy="12" r="2" fill="#e5554a"/><circle cx="11" cy="8.500" r="2" fill="#f2c230"/><circle cx="16.500" cy="9.500" r="2" fill="#4aa656"/><circle cx="6.500" cy="17.500" r="2" fill="#3d7fd6"/><path d="M24.500 1 27 3 17 19l-3 1 .5-3z" fill="#d99a4e"/><path d="M24.500 1 27 3l-2 3-2.500-2z" fill="#8d5a2a"/></svg>
<div class="a " style="left:742px;top:765px;width:40px;height:3px;background:#76b9ed;"></div>
<div class="a " style="left:799px;top:736px;width:25px;height:25px;background:#fff;"></div>
<div class="a t" style="left:800.5px;top:739.5px;font-size:14px;line-height:18px;color:#16469d;font-weight:bold;font-style:italic;transform:scaleX(0.943);-webkit-text-stroke:0.500px #16469d;">SRi</div>
<div class="a " style="left:791px;top:765px;width:40px;height:3px;background:#76b9ed;"></div>
<svg style="left:1092px;top:743px" width="14" height="9" viewBox="0 0 14 9"><path d="M1 8l6-6.500L13 8" fill="none" stroke="#fff" stroke-width="1.400"/></svg>
<svg style="left:1116px;top:738px" width="16" height="20" viewBox="0 0 16 20"><rect x="1.500" y="5.500" width="8" height="9" rx="2" fill="none" stroke="#fff" stroke-width="1.200"/><path d="M9.500 9l4-2v6l-4-2" fill="none" stroke="#fff" stroke-width="1.100"/><path d="M3 3c1.500-1.500 5-1.500 6.500 0M3 17c1.500 1.500 5 1.500 6.500 0" fill="none" stroke="#fff" stroke-width="1"/></svg>
<svg style="left:1139px;top:739px" width="19" height="19" viewBox="0 0 19 19"><path d="M1 3 16 1v13L1 16z" fill="none" stroke="#fff" stroke-width="1.200"/><path d="M5 7c1.500-2 5-2 6.500 0M12 10c-1.500 2-5 2-6.500 0M11.500 5v2.200H9.300M5.500 12V9.800h2.200" fill="none" stroke="#fff" stroke-width="1"/><circle cx="14" cy="14.500" r="3.300" fill="#f7931e"/></svg>
<svg style="left:1163px;top:740px" width="17" height="16" viewBox="0 0 17 16"><rect x="5.500" y="1.500" width="10.500" height="8" fill="none" stroke="#fff" stroke-width="1.200"/><path d="M10.500 9.500v3.500M7 14.500h7" stroke="#fff" stroke-width="1.200"/><rect x="0.600" y="0.600" width="3.800" height="3.800" fill="#101010" stroke="#fff" stroke-width="1"/><path d="M2.500 4.500V8h3" fill="none" stroke="#fff" stroke-width="1"/></svg>
<svg style="left:1187px;top:740px" width="18" height="16" viewBox="0 0 18 16"><path d="M1 5.500h3l4-3.500v12l-4-3.500H1z" fill="none" stroke="#fff" stroke-width="1.200"/><path d="M10.500 5.500c1 1.500 1 3.500 0 5" fill="none" stroke="#fff" stroke-width="1.100"/><path d="M13 3.500c2 2.500 2 6.500 0 9" fill="none" stroke="#bbb" stroke-width="1"/><path d="M15.500 2c2.500 3.500 2.500 8.500 0 12" fill="none" stroke="#777" stroke-width="1"/></svg>
<div class="a t" style="left:1215px;top:740.0px;font-size:12.5px;line-height:16px;color:#fff;transform:scaleX(0.760);">ESP</div>
<div class="a t" style="left:1261px;top:730.5px;font-size:12.5px;line-height:16px;color:#fff;transform:scaleX(0.873);">11:51</div>
<div class="a t" style="left:1249px;top:748.5px;font-size:12.5px;line-height:16px;color:#fff;transform:scaleX(0.944);">16/9/2024</div>
<svg style="left:1318px;top:738px" width="26" height="26" viewBox="0 0 26 26"><path d="M1.500 1.500h16v11.500H7.500l-3.500 3.500v-3.500H1.500z" fill="#fff"/><path d="M4 4.500h11M4 7.200h11M4 10h7" stroke="#101010" stroke-width="1"/><circle cx="16.300" cy="16.800" r="7" fill="#2f2f2f" stroke="#8c8c8c" stroke-width="1.100"/></svg>
<div class="a t" style="left:1330.8px;top:747.0px;font-size:12.5px;line-height:16px;color:#fff;font-weight:bold;">2</div>
<div class="a " style="left:1355px;top:728px;width:1px;height:40px;background:#4c4c4c;"></div>
<div class="a t" style="left:1031px;top:649.0px;font-size:20px;line-height:26px;color:rgba(125,125,125,0.52);transform:scaleX(0.988);">Activar Windows</div>
<div class="a t" style="left:1031px;top:675.5px;font-size:14px;line-height:18px;color:rgba(125,125,125,0.52);transform:scaleX(1.054);">Ve a Configuración para activar Windows.</div>
</body></html>
